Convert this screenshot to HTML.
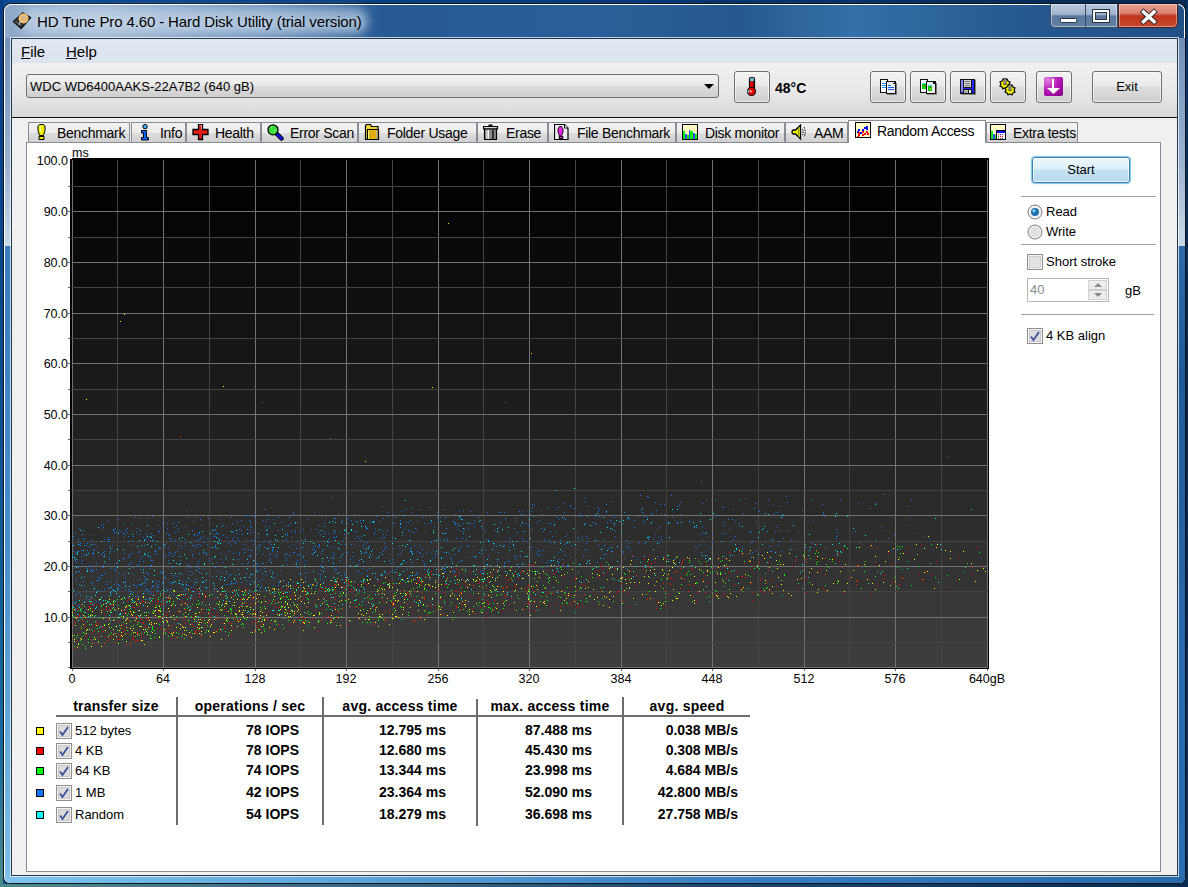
<!DOCTYPE html>
<html><head><meta charset="utf-8"><style>
*{margin:0;padding:0;box-sizing:border-box}
html,body{width:1188px;height:887px;overflow:hidden;background:#0b3a78;font-family:"Liberation Sans", sans-serif;color:#000}
.abs{position:absolute}
#desk{position:absolute;left:0;top:0;width:1188px;height:887px;background:linear-gradient(90deg,#0b4a90 0%,#0a3a78 50%,#082850 100%)}
#frame{position:absolute;left:3px;top:3px;width:1183px;height:881px;border:1px solid #0c1620;border-radius:8px 8px 7px 7px;background:#fff}
#title{position:absolute;left:5px;top:5px;width:1179px;height:33px;border-radius:6px 6px 0 0;background:linear-gradient(90deg,#8ea9c9 0%,#9fb7d2 8%,#6f92bb 22%,#275a94 32%,#2a5f99 50%,#25598f 62%,#3570a8 72%,#265a92 85%,#214f86 100%)}
#glow{position:absolute;left:20px;top:8px;width:348px;height:26px;border-radius:13px;background:rgba(200,218,236,.6);filter:blur(4px)}
#ttext{position:absolute;left:37px;top:13px;font-size:15px;letter-spacing:-0.12px;white-space:nowrap;color:#000;text-shadow:0 0 6px rgba(255,255,255,.6)}
#client{position:absolute;left:11px;top:38px;width:1167px;height:838px;border:1px solid #25384c;background:#f0f0f0;box-shadow:0 0 0 1px rgba(255,255,255,.7)}
#menu{position:absolute;left:12px;top:39px;width:1165px;height:24px;background:linear-gradient(180deg,#e2e8f1,#dce3ec)}
.mi{position:absolute;top:3px;font-size:15px}
.mi u{text-decoration:underline;text-underline-offset:1px;text-decoration-thickness:1px}
#tool{position:absolute;left:12px;top:63px;width:1165px;height:55px;background:linear-gradient(180deg,#f0f0f0 0%,#e9e9e9 50%,#d9d9d9 100%);border-bottom:1px solid #101010}
.btn{position:absolute;border:1px solid #707070;border-radius:3px;background:linear-gradient(180deg,#f2f2f2 0%,#ebebeb 45%,#dddddd 50%,#cfcfcf 100%);box-shadow:inset 0 0 0 1px rgba(255,255,255,.6)}
#combo{position:absolute;left:26px;top:74px;width:693px;height:24px;border:1px solid #707070;border-radius:3px;background:linear-gradient(180deg,#f2f2f2 0%,#ebebeb 45%,#dddddd 50%,#cfcfcf 100%);font-size:13px;padding:4px 0 0 3px;white-space:nowrap}
#tabpanel{position:absolute;left:26px;top:142px;width:1135px;height:730px;border:1px solid #898c95;background:#fff}
.tab{position:absolute;top:122px;height:21px;border:1px solid #898c95;border-bottom:none;background:linear-gradient(180deg,#f2f2f2 0%,#ebebeb 50%,#dddddd 50%,#cfcfcf 100%);white-space:nowrap}
.tab.sel{top:120px;height:23px;background:#fff;z-index:2}
.ti{position:absolute;left:5px;top:1px;width:18px;height:17px;line-height:0}
.tt{position:absolute;left:28px;top:2px;font-size:14px;letter-spacing:-0.3px}
.tab.sel .tt{top:2px}
.tab.sel .ti{top:1px}
.yl{position:absolute;left:20px;width:48px;text-align:right;font-size:12.5px;line-height:16px}
.xl{position:absolute;top:671px;width:80px;text-align:center;font-size:12.5px;line-height:16px}
.sw{position:absolute;left:36px;width:8px;height:8px;border:1px solid #000}
.cb{position:absolute;width:16px;height:16px}
.rn{position:absolute;left:75px;font-size:13px;line-height:16px}
.rv{position:absolute;font-size:14px;font-weight:bold;text-align:right;line-height:18px;white-space:nowrap}
.hd{position:absolute;top:697px;font-size:14px;font-weight:bold;text-align:center;line-height:18px;white-space:nowrap;letter-spacing:0.25px}
.vd{position:absolute;width:2px;background:#6d6d6d}
.sep{position:absolute;left:1021px;height:2px;border-top:1px solid #a0a0a0;border-bottom:1px solid #fff}
.lbl{position:absolute;font-size:13px;line-height:16px;white-space:nowrap}
</style></head><body>
<div id="desk"></div>
<div class="abs" style="left:1186px;top:0;width:2px;height:887px;background:linear-gradient(180deg,#0a3468,#06244c 40%,#0a2a50)"></div>
<div class="abs" style="left:0;top:884px;width:1188px;height:3px;background:linear-gradient(90deg,#4a8a88,#3a6a80 30%,#1a4a70 60%,#082a50)"></div>
<div class="abs" style="left:0;top:0;width:3px;height:887px;background:linear-gradient(180deg,#0a3d86 0%,#0b4a90 40%,#1a6a9a 85%,#4a8a88 100%)"></div>
<div id="frame"></div>
<div class="abs" style="left:5px;top:38px;width:6px;height:208px;background:linear-gradient(180deg,#7593ba,#9ab3d0 60%,#c9d9e9)"></div>
<div class="abs" style="left:1178px;top:38px;width:7px;height:208px;background:linear-gradient(180deg,#6f8fb8,#9ab3d0 60%,#c9d9e9)"></div>
<div class="abs" style="left:5px;top:246px;width:6px;height:630px;background:linear-gradient(180deg,#3a7cbc,#4a90cc 50%,#7cc0e8)"></div>
<div class="abs" style="left:1178px;top:246px;width:7px;height:630px;background:linear-gradient(180deg,#2e6aaa,#225a98 20%,#2a6aae 70%,#2a6db0)"></div>
<div class="abs" style="left:5px;top:876px;width:1180px;height:7px;border-radius:0 0 5px 5px;background:linear-gradient(90deg,#80c4ec,#5aa4d8 30%,#3a80c0 60%,#2a6aaa)"></div>
<div id="title"></div>
<div id="glow"></div>
<svg class="abs" style="left:10px;top:10px" width="24" height="22" viewBox="0 0 24 22"><path d="M3 11.6L12.5 2.6 21 7.6 11.2 18.9z" fill="#2a2a2a" stroke="#111" stroke-width="1"/><path d="M5 12l6 4 1-1-6-4z" fill="#666"/><circle cx="13.5" cy="8.5" r="5" fill="#f2c278"/><circle cx="13.5" cy="8.5" r="3" fill="#e8b060"/><rect x="12.5" y="6.5" width="2.5" height="2.5" fill="#b8b8c8"/><path d="M11 10l-2 5" stroke="#ddd" stroke-width="1"/></svg>
<div id="ttext">HD Tune Pro 4.60 - Hard Disk Utility (trial version)</div>
<!-- caption buttons -->
<div class="abs" style="left:1050px;top:4px;width:68px;height:24px;border:1px solid #3b4d66;border-top:none;border-radius:0 0 0 5px;background:linear-gradient(180deg,#b9c9dd 0%,#9fb4cd 45%,#5a789e 52%,#62819f 100%);box-shadow:inset 0 0 0 1px rgba(255,255,255,.45)"></div>
<div class="abs" style="left:1085px;top:4px;width:1px;height:24px;background:#3b4d66"></div>
<div class="abs" style="left:1118px;top:4px;width:60px;height:24px;border:1px solid #4a2020;border-top:none;border-radius:0 0 5px 0;background:linear-gradient(180deg,#e8a090 0%,#d88070 40%,#c0341e 52%,#c84a30 100%);box-shadow:inset 0 0 0 1px rgba(255,255,255,.4)"></div>
<svg class="abs" style="left:1040px;top:0" width="148" height="32" viewBox="0 0 148 32">
<rect x="20.5" y="18.5" width="16" height="4" rx="1" fill="#fff" stroke="#2a3440"/>
<rect x="52.5" y="9.5" width="17" height="13" fill="none" stroke="#2a3440"/>
<rect x="55.5" y="12.5" width="11" height="7" fill="none" stroke="#2a3440"/>
<rect x="54" y="11" width="14" height="10" fill="none" stroke="#fff" stroke-width="2"/>
<path d="M103.5 12L114 21.5M114 12L103.5 21.5" stroke="#3a2a2a" stroke-width="5.4" stroke-linecap="square"/>
<path d="M103.5 12L114 21.5M114 12L103.5 21.5" stroke="#fff" stroke-width="3.4" stroke-linecap="square"/>
</svg>
<div id="client"></div>
<div id="menu"></div>
<div class="mi" style="left:21px;top:43px"><u>F</u>ile</div>
<div class="mi" style="left:66px;top:43px"><u>H</u>elp</div>
<div id="tool"></div>
<div id="combo">WDC WD6400AAKS-22A7B2 (640 gB)</div>
<div class="abs" style="left:704px;top:84px;width:0;height:0;border-left:5px solid transparent;border-right:5px solid transparent;border-top:5px solid #000"></div>
<div class="btn" style="left:734px;top:71px;width:36px;height:32px"></div>
<svg class="abs" style="left:744px;top:76px" width="16" height="21" viewBox="0 0 16 21">
<rect x="5.5" y="1.5" width="5" height="13" rx="1.5" fill="#f00000" stroke="#111" stroke-width="1.2"/><rect x="6.2" y="2.2" width="3.6" height="3" fill="#40e0f0"/><rect x="9" y="5" width="1" height="9" fill="#500"/>
<circle cx="7.5" cy="15.5" r="4" fill="#e80000" stroke="#111" stroke-width="1.2"/><path d="M4.3 14v3" stroke="#60e0f0" stroke-width="1.2"/><path d="M6 14.2q.5 1.6 2 1.8" stroke="#fff" stroke-width="1.1" fill="none"/>
</svg>
<div class="abs" style="left:775px;top:80px;font-size:14px;font-weight:bold;line-height:16px">48°C</div>
<div class="btn" style="left:870px;top:71px;width:36px;height:32px"></div>
<div class="btn" style="left:910px;top:71px;width:36px;height:32px"></div>
<div class="btn" style="left:950px;top:71px;width:36px;height:32px"></div>
<div class="btn" style="left:990px;top:71px;width:36px;height:32px"></div>
<div class="btn" style="left:1036px;top:71px;width:36px;height:32px"></div>
<div class="btn" style="left:1092px;top:71px;width:70px;height:32px"></div>
<div class="abs" style="left:1092px;top:79px;width:70px;text-align:center;font-size:13px;line-height:16px">Exit</div>
<svg class="abs" style="left:874px;top:74px" width="30" height="26" viewBox="0 0 30 26" shape-rendering="crispEdges">
<rect x="6" y="5" width="8" height="14" fill="#111"/><rect x="7" y="6" width="6" height="12" fill="#fff"/>
<rect x="8" y="9" width="4" height="1" fill="#1e90ff"/><rect x="8" y="11" width="5" height="1" fill="#1e90ff"/><rect x="8" y="13" width="5" height="1" fill="#1e90ff"/>
<rect x="12" y="7" width="10" height="13" fill="#111"/><rect x="13" y="8" width="6" height="11" fill="#eee"/><rect x="19" y="10" width="2" height="9" fill="#eee"/><rect x="19" y="8" width="1" height="1" fill="#fff"/>
<rect x="14" y="11" width="3" height="1" fill="#1060ff"/><rect x="14" y="13" width="6" height="1" fill="#1060ff"/><rect x="14" y="15" width="6" height="1" fill="#1060ff"/>
<rect x="22" y="9" width="1" height="12" fill="#777"/><rect x="13" y="20" width="10" height="1" fill="#888"/>
</svg>
<svg class="abs" style="left:914px;top:74px" width="30" height="26" viewBox="0 0 30 26" shape-rendering="crispEdges">
<rect x="6" y="5" width="8" height="14" fill="#111"/><rect x="7" y="6" width="6" height="12" fill="#fff"/>
<rect x="8" y="9" width="4" height="6" fill="#00d000"/><rect x="8" y="9" width="4" height="1" fill="#30d0ff"/><rect x="10" y="11" width="1" height="1" fill="#f00"/>
<rect x="12" y="7" width="10" height="13" fill="#111"/><rect x="13" y="8" width="6" height="11" fill="#eee"/><rect x="19" y="10" width="2" height="9" fill="#eee"/>
<rect x="14" y="11" width="4" height="6" fill="#00d000"/><rect x="14" y="11" width="4" height="1" fill="#30d0ff"/><rect x="16" y="13" width="1" height="1" fill="#f00"/><rect x="16" y="14" width="1" height="2" fill="#e0e000"/>
<rect x="22" y="9" width="1" height="12" fill="#777"/><rect x="13" y="20" width="10" height="1" fill="#888"/>
</svg>
<svg class="abs" style="left:960px;top:79px" width="17" height="17" viewBox="0 0 17 17" shape-rendering="crispEdges">
<rect x="1" y="1" width="15" height="15" fill="#888"/>
<rect x="0" y="0" width="15" height="15" fill="#111"/><rect x="1" y="1" width="13" height="13" fill="#2222ff"/><rect x="1" y="1" width="2" height="12" fill="#8888ff"/>
<rect x="3" y="1" width="9" height="8" fill="#111"/><rect x="4" y="1" width="7" height="7" fill="#d4d4d4"/><rect x="5" y="2" width="5" height="1" fill="#777"/><rect x="5" y="4" width="5" height="1" fill="#777"/><rect x="5" y="6" width="5" height="1" fill="#777"/>
<rect x="3" y="10" width="9" height="5" fill="#111"/><rect x="4" y="11" width="4" height="3" fill="#b0b0b0"/><rect x="9" y="11" width="2" height="3" fill="#eee"/>
</svg>
<svg class="abs" style="left:996px;top:76px" width="22" height="22" viewBox="0 0 22 22">
<g stroke="#111" stroke-width="1.3" fill="#f0f000"><path d="M4 6l2-1 1-2 2 1 2-1 1 2 2 1-1 2 1 2-2 1-1 2-2-1-2 1-1-2-2-1 1-2z"/><path d="M9 12l2-1 1-2 2 1 2-1 1 2 2 1-1 2 1 2-2 1-1 2-2-1-2 1-1-2-2-1 1-2z"/></g>
<rect x="8" y="2.5" width="2" height="6" fill="#ccd" stroke="#222" stroke-width=".8"/><rect x="13" y="8.5" width="2" height="6" fill="#ccd" stroke="#222" stroke-width=".8"/>
</svg>
<div class="abs" style="left:1044px;top:77px;width:19px;height:19px;border-radius:2px;background:radial-gradient(circle at 20% 15%,#e080e0 0%,#b820b8 45%,#9a009a 80%,#700070 100%)"></div>
<svg class="abs" style="left:1044px;top:77px" width="19" height="19" viewBox="0 0 19 19" shape-rendering="crispEdges">
<rect x="8" y="2" width="2" height="11" fill="#fff"/><path d="M3 11h13l-6.5 6z" fill="#fff" shape-rendering="geometricPrecision"/>
</svg>
<div class="tab" style="left:28px;width:102px"><span class="ti" style="left:5px"><svg width="16" height="17" viewBox="0 0 16 17"><path d="M5.5 0.5h4l1.5 1.5v4.5l-1.5 5h-4l-1.5-5v-4.5z" fill="#f0f000" stroke="#000"/><path d="M5.5 2h1.5v6h-1z" fill="#ffff90"/><path d="M5 12.5h5v3h-5z" fill="#e8e800" stroke="#000"/></svg></span><span class="tt">Benchmark</span></div><div class="tab" style="left:131px;width:55px"><span class="ti" style="left:5px"><svg width="16" height="17" viewBox="0 0 16 17"><circle cx="8" cy="2.6" r="2.2" fill="#40b0ff" stroke="#000"/><path d="M4.5 6.5h5v7h2v2.5h-7v-2.5h2v-4.5h-2z" fill="#0a64ff" stroke="#000"/></svg></span><span class="tt">Info</span></div><div class="tab" style="left:186px;width:75px"><span class="ti" style="left:5px"><svg width="18" height="17" viewBox="0 0 18 17"><path d="M6.5 0.5h4v5h5.5v5h-5.5v5h-4v-5h-5.5v-5h5.5z" fill="#e41c1c" stroke="#000" stroke-width="1.3"/><path d="M7.5 1.5h2v4" fill="none" stroke="#ff9090"/></svg></span><span class="tt">Health</span></div><div class="tab" style="left:261px;width:97px"><span class="ti" style="left:5px"><svg width="17" height="17" viewBox="0 0 17 17"><path d="M9.5 9.5l5 5" stroke="#000" stroke-width="4.5" stroke-linecap="round"/><path d="M9.5 9.5l5 5" stroke="#1010e0" stroke-width="2.6" stroke-linecap="round"/><circle cx="6" cy="5.8" r="5" fill="#3ce03c" stroke="#000" stroke-width="1.3"/><path d="M3.5 3.5l1.5-1.5M6.5 8l2.5-2.5" stroke="#c0ffc0" stroke-width=".8"/></svg></span><span class="tt">Error Scan</span></div><div class="tab" style="left:358px;width:119px"><span class="ti" style="left:5px"><svg width="17" height="17" viewBox="0 0 17 17"><path d="M1.5 15.5V1.5l1-1h4l1 2h6.5v13z" fill="#f2d430" stroke="#000" stroke-width="1.2"/><path d="M3.5 15.5v-10h11v10z" fill="#e0b010" stroke="#000" stroke-width="1.2"/><rect x="12" y="6" width="1" height="9" fill="#aaa"/><rect x="4" y="6" width="1" height="9" fill="#fff590"/></svg></span><span class="tt">Folder Usage</span></div><div class="tab" style="left:477px;width:71px"><span class="ti" style="left:5px"><svg width="17" height="17" viewBox="0 0 17 17"><path d="M0.5 2.5h14v2.5h-14z" fill="#d8d8d8" stroke="#000" stroke-width="1.2"/><path d="M5.5 0.5h4v2h-4z" fill="#000"/><path d="M1.5 5h12v10.5h-12z" fill="#8a8a8a" stroke="#000" stroke-width="1.2"/><rect x="3" y="6" width="2" height="9" fill="#c8c8c8"/><rect x="5" y="6" width="1" height="9" fill="#f4f4f4"/><rect x="9" y="6" width="2" height="9" fill="#303030"/></svg></span><span class="tt">Erase</span></div><div class="tab" style="left:548px;width:128px"><span class="ti" style="left:5px"><svg width="16" height="17" viewBox="0 0 16 17"><path d="M0.5 0.5h10l3.5 3.5v11.5h-13.5z" fill="#f0f0f0" stroke="#000" stroke-width="1.2"/><path d="M10.5 0.5v3.5h3.5" fill="#fff" stroke="#000"/><path d="M5.5 2.5h2l1.5 2.5v3l-1.5 4h-2l-1.5-4v-3z" fill="#f020f0" stroke="#000" stroke-width=".9"/><path d="M5 12.5h4v2h-4z" fill="#e020e0" stroke="#000" stroke-width=".9"/></svg></span><span class="tt">File Benchmark</span></div><div class="tab" style="left:676px;width:109px"><span class="ti" style="left:5px"><svg width="17" height="17" viewBox="0 0 17 17" shape-rendering="crispEdges"><rect x="0" y="0" width="16" height="16" fill="#000"/><rect x="1" y="1" width="14" height="14" fill="#fff8c0"/><rect x="1" y="7" width="2" height="8" fill="#00f000"/><rect x="3" y="10" width="2" height="5" fill="#4040ff"/><rect x="5" y="11" width="2" height="4" fill="#00f000"/><rect x="7" y="6" width="1" height="9" fill="#4040ff"/><rect x="8" y="7" width="3" height="8" fill="#00f000"/><rect x="11" y="9" width="2" height="6" fill="#4040ff"/><rect x="13" y="10" width="2" height="5" fill="#00f000"/></svg></span><span class="tt">Disk monitor</span></div><div class="tab" style="left:785px;width:63px"><span class="ti" style="left:5px"><svg width="17" height="17" viewBox="0 0 17 17"><path d="M1 8a1.5 2 0 0 1 1.5-2h2l5-5v14l-5-5h-2a1.5 2 0 0 1-1.5-2z" fill="#f0f000" stroke="#000" stroke-width="1.3"/><path d="M7.5 2v12" stroke="#666" stroke-width=".6"/><path d="M11.5 5q1.2 3 0 6M13 3q2.6 5 0 10" fill="none" stroke="#000" stroke-width="1" stroke-dasharray="1.5 1"/></svg></span><span class="tt">AAM</span></div><div class="tab sel" style="left:848px;width:138px"><span class="ti" style="left:6px"><svg width="17" height="17" viewBox="0 0 17 17" shape-rendering="crispEdges"><rect x="0" y="0" width="16" height="16" fill="#000"/><rect x="1" y="1" width="14" height="14" fill="#fffbc8"/><g fill="#0000ff"><rect x="3" y="7" width="2" height="2"/><rect x="7" y="7" width="2" height="2"/><rect x="9" y="5" width="2" height="2"/><rect x="11" y="4" width="2" height="2"/><rect x="11" y="6" width="2" height="2"/><rect x="2" y="9" width="2" height="2"/><rect x="5" y="10" width="2" height="2"/></g><g fill="#ff0000"><rect x="3" y="10" width="2" height="2"/><rect x="3" y="12" width="2" height="2"/><rect x="7" y="9" width="2" height="2"/><rect x="7" y="12" width="2" height="2"/><rect x="9" y="11" width="2" height="2"/><rect x="11" y="9" width="2" height="2"/><rect x="12" y="11" width="2" height="2"/><rect x="2" y="14" width="2" height="1"/></g></svg></span><span class="tt">Random Access</span></div><div class="tab" style="left:986px;width:92px"><span class="ti" style="left:3px"><svg width="17" height="17" viewBox="0 0 17 17" shape-rendering="crispEdges"><rect x="0" y="0" width="16" height="16" fill="#000"/><rect x="1" y="1" width="14" height="14" fill="#fff8c8"/><rect x="1" y="7" width="2" height="8" fill="#00f000"/><rect x="3" y="10" width="2" height="5" fill="#4040ff"/><rect x="5" y="11" width="1" height="4" fill="#00f000"/><rect x="6" y="6" width="10" height="10" fill="#000"/><rect x="7" y="7" width="8" height="8" fill="#f4f4f4"/><rect x="7" y="7" width="8" height="2" fill="#0000f0"/><g fill="#ff0000"><rect x="8" y="10" width="1" height="1"/><rect x="12" y="10" width="1" height="1"/><rect x="10" y="12" width="1" height="1"/><rect x="12" y="12" width="1" height="1"/><rect x="8" y="14" width="1" height="1"/><rect x="10" y="14" width="1" height="1"/></g><g fill="#0000ff"><rect x="10" y="10" width="1" height="1"/><rect x="12" y="14" width="1" height="1"/></g><rect x="8" y="12" width="1" height="1" fill="#00c000"/></svg></span><span class="tt" style="left:26px">Extra tests</span></div>
<div id="tabpanel"></div>
<div class="abs" style="left:849px;top:142px;width:136px;height:2px;background:#fff;z-index:3"></div>
<svg class="abs" style="left:0;top:0" width="1188" height="887" shape-rendering="crispEdges"><rect x="72" y="158" width="917" height="511" fill="#000"/><rect x="70" y="159" width="2" height="510" fill="#000"/><rect x="72" y="160" width="916" height="27" fill="rgb(0,0,0)"/><rect x="72" y="186" width="916" height="26" fill="rgb(3,3,3)"/><rect x="72" y="211" width="916" height="27" fill="rgb(6,6,6)"/><rect x="72" y="237" width="916" height="26" fill="rgb(10,10,10)"/><rect x="72" y="262" width="916" height="26" fill="rgb(13,13,13)"/><rect x="72" y="287" width="916" height="27" fill="rgb(16,16,16)"/><rect x="72" y="313" width="916" height="26" fill="rgb(19,19,19)"/><rect x="72" y="338" width="916" height="26" fill="rgb(22,22,22)"/><rect x="72" y="363" width="916" height="27" fill="rgb(26,26,26)"/><rect x="72" y="389" width="916" height="26" fill="rgb(29,29,29)"/><rect x="72" y="414" width="916" height="26" fill="rgb(32,32,32)"/><rect x="72" y="439" width="916" height="27" fill="rgb(35,35,35)"/><rect x="72" y="465" width="916" height="26" fill="rgb(39,39,39)"/><rect x="72" y="490" width="916" height="26" fill="rgb(42,42,42)"/><rect x="72" y="515" width="916" height="27" fill="rgb(45,45,45)"/><rect x="72" y="541" width="916" height="26" fill="rgb(48,48,48)"/><rect x="72" y="566" width="916" height="26" fill="rgb(51,51,51)"/><rect x="72" y="591" width="916" height="27" fill="rgb(55,55,55)"/><rect x="72" y="617" width="916" height="26" fill="rgb(58,58,58)"/><rect x="72" y="642" width="916" height="26" fill="rgb(61,61,61)"/><rect x="72" y="160" width="1" height="508" fill="#727272"/><rect x="117" y="160" width="1" height="508" fill="#444444"/><rect x="163" y="160" width="1" height="508" fill="#727272"/><rect x="209" y="160" width="1" height="508" fill="#444444"/><rect x="255" y="160" width="1" height="508" fill="#727272"/><rect x="300" y="160" width="1" height="508" fill="#444444"/><rect x="346" y="160" width="1" height="508" fill="#727272"/><rect x="392" y="160" width="1" height="508" fill="#444444"/><rect x="438" y="160" width="1" height="508" fill="#727272"/><rect x="483" y="160" width="1" height="508" fill="#444444"/><rect x="529" y="160" width="1" height="508" fill="#727272"/><rect x="575" y="160" width="1" height="508" fill="#444444"/><rect x="621" y="160" width="1" height="508" fill="#727272"/><rect x="666" y="160" width="1" height="508" fill="#444444"/><rect x="712" y="160" width="1" height="508" fill="#727272"/><rect x="758" y="160" width="1" height="508" fill="#444444"/><rect x="804" y="160" width="1" height="508" fill="#727272"/><rect x="849" y="160" width="1" height="508" fill="#444444"/><rect x="895" y="160" width="1" height="508" fill="#727272"/><rect x="941" y="160" width="1" height="508" fill="#444444"/><rect x="987" y="160" width="1" height="508" fill="#727272"/><rect x="72" y="186" width="916" height="1" fill="#444444"/><rect x="72" y="211" width="916" height="1" fill="#727272"/><rect x="72" y="237" width="916" height="1" fill="#444444"/><rect x="72" y="262" width="916" height="1" fill="#727272"/><rect x="72" y="287" width="916" height="1" fill="#444444"/><rect x="72" y="313" width="916" height="1" fill="#727272"/><rect x="72" y="338" width="916" height="1" fill="#444444"/><rect x="72" y="363" width="916" height="1" fill="#727272"/><rect x="72" y="389" width="916" height="1" fill="#444444"/><rect x="72" y="414" width="916" height="1" fill="#727272"/><rect x="72" y="439" width="916" height="1" fill="#444444"/><rect x="72" y="465" width="916" height="1" fill="#727272"/><rect x="72" y="490" width="916" height="1" fill="#444444"/><rect x="72" y="515" width="916" height="1" fill="#727272"/><rect x="72" y="541" width="916" height="1" fill="#444444"/><rect x="72" y="566" width="916" height="1" fill="#727272"/><rect x="72" y="591" width="916" height="1" fill="#444444"/><rect x="72" y="617" width="916" height="1" fill="#727272"/><rect x="72" y="642" width="916" height="1" fill="#444444"/><rect x="72" y="667" width="916" height="1" fill="#727272"/><rect x="68" y="186" width="2" height="1" fill="#6a6a6a"/><rect x="68" y="211" width="2" height="1" fill="#6a6a6a"/><rect x="68" y="237" width="2" height="1" fill="#6a6a6a"/><rect x="68" y="262" width="2" height="1" fill="#6a6a6a"/><rect x="68" y="287" width="2" height="1" fill="#6a6a6a"/><rect x="68" y="313" width="2" height="1" fill="#6a6a6a"/><rect x="68" y="338" width="2" height="1" fill="#6a6a6a"/><rect x="68" y="363" width="2" height="1" fill="#6a6a6a"/><rect x="68" y="389" width="2" height="1" fill="#6a6a6a"/><rect x="68" y="414" width="2" height="1" fill="#6a6a6a"/><rect x="68" y="439" width="2" height="1" fill="#6a6a6a"/><rect x="68" y="465" width="2" height="1" fill="#6a6a6a"/><rect x="68" y="490" width="2" height="1" fill="#6a6a6a"/><rect x="68" y="515" width="2" height="1" fill="#6a6a6a"/><rect x="68" y="541" width="2" height="1" fill="#6a6a6a"/><rect x="68" y="566" width="2" height="1" fill="#6a6a6a"/><rect x="68" y="591" width="2" height="1" fill="#6a6a6a"/><rect x="68" y="617" width="2" height="1" fill="#6a6a6a"/><rect x="68" y="642" width="2" height="1" fill="#6a6a6a"/><rect x="68" y="667" width="2" height="1" fill="#6a6a6a"/><rect x="72" y="669" width="1" height="2" fill="#6a6a6a"/><rect x="163" y="669" width="1" height="2" fill="#6a6a6a"/><rect x="255" y="669" width="1" height="2" fill="#6a6a6a"/><rect x="346" y="669" width="1" height="2" fill="#6a6a6a"/><rect x="438" y="669" width="1" height="2" fill="#6a6a6a"/><rect x="529" y="669" width="1" height="2" fill="#6a6a6a"/><rect x="621" y="669" width="1" height="2" fill="#6a6a6a"/><rect x="712" y="669" width="1" height="2" fill="#6a6a6a"/><rect x="804" y="669" width="1" height="2" fill="#6a6a6a"/><rect x="895" y="669" width="1" height="2" fill="#6a6a6a"/><rect x="987" y="669" width="1" height="2" fill="#6a6a6a"/><rect x="988" y="158" width="1" height="511" fill="#000"/><rect x="70" y="668" width="919" height="1" fill="#000"/><path fill="#0a80ff" d="M696 527h1v1h-1zM125 577h1v1h-1zM398 567h1v1h-1zM369 579h1v1h-1zM374 534h1v1h-1zM201 538h1v1h-1zM289 517h1v1h-1zM392 559h1v1h-1zM383 551h1v1h-1zM468 528h1v1h-1zM90 565h1v1h-1zM410 549h1v1h-1zM400 520h1v1h-1zM208 518h1v1h-1zM100 590h1v1h-1zM185 590h1v1h-1zM250 555h1v1h-1zM201 525h1v1h-1zM84 545h1v1h-1zM438 539h1v1h-1zM328 539h1v1h-1zM124 558h1v1h-1zM557 517h1v1h-1zM199 553h1v1h-1zM505 518h1v1h-1zM611 551h1v1h-1zM434 527h1v1h-1zM387 512h1v1h-1zM260 544h1v1h-1zM408 530h1v1h-1zM256 554h1v1h-1zM219 539h1v1h-1zM473 523h1v1h-1zM650 523h1v1h-1zM627 548h1v1h-1zM320 577h1v1h-1zM148 566h1v1h-1zM155 550h1v1h-1zM429 572h1v1h-1zM151 560h1v1h-1zM377 579h1v1h-1zM197 582h1v1h-1zM397 574h1v1h-1zM288 525h1v1h-1zM107 520h1v1h-1zM599 516h1v1h-1zM598 544h1v1h-1zM143 537h1v1h-1zM297 560h1v1h-1zM220 559h1v1h-1zM812 499h1v1h-1zM243 526h1v1h-1zM217 566h1v1h-1zM73 545h1v1h-1zM363 566h1v1h-1zM417 521h1v1h-1zM104 589h1v1h-1zM306 552h1v1h-1zM444 569h1v1h-1zM173 575h1v1h-1zM756 521h1v1h-1zM156 582h1v1h-1zM131 562h1v1h-1zM380 538h1v1h-1zM906 525h1v1h-1zM226 571h1v1h-1zM441 557h1v1h-1zM765 541h1v1h-1zM428 575h1v1h-1zM564 518h1v1h-1zM507 531h1v1h-1zM300 574h1v1h-1zM75 608h1v1h-1zM128 536h1v1h-1zM312 549h1v1h-1zM114 584h1v1h-1zM187 565h1v1h-1zM152 516h1v1h-1zM603 558h1v1h-1zM813 520h1v1h-1zM402 550h1v1h-1zM187 517h1v1h-1zM463 523h1v1h-1zM164 557h1v1h-1zM450 557h1v1h-1zM730 541h1v1h-1zM272 550h1v1h-1zM470 511h1v1h-1zM266 521h1v1h-1zM197 541h1v1h-1zM432 558h1v1h-1zM623 552h1v1h-1zM700 534h1v1h-1zM250 522h1v1h-1zM520 525h1v1h-1zM929 538h1v1h-1zM485 531h1v1h-1zM360 520h1v1h-1zM347 518h1v1h-1zM724 525h1v1h-1zM398 578h1v1h-1zM435 553h1v1h-1zM128 589h1v1h-1zM703 532h1v1h-1zM570 506h1v1h-1zM354 538h1v1h-1zM536 553h1v1h-1zM124 534h1v1h-1zM416 574h1v1h-1zM234 541h1v1h-1zM444 509h1v1h-1zM610 520h1v1h-1zM72 545h1v1h-1zM87 568h1v1h-1zM99 600h1v1h-1zM562 565h1v1h-1zM578 537h1v1h-1zM473 556h1v1h-1zM278 530h1v1h-1zM116 563h1v1h-1zM84 576h1v1h-1zM523 540h1v1h-1zM158 590h1v1h-1zM256 586h1v1h-1zM133 536h1v1h-1zM706 499h1v1h-1zM185 526h1v1h-1zM226 593h1v1h-1zM532 507h1v1h-1zM319 532h1v1h-1zM324 568h1v1h-1zM648 539h1v1h-1zM357 570h1v1h-1zM586 543h1v1h-1zM209 539h1v1h-1zM72 555h1v1h-1zM259 590h1v1h-1zM218 590h1v1h-1zM293 544h1v1h-1zM888 538h1v1h-1zM424 563h1v1h-1zM133 574h1v1h-1zM103 552h1v1h-1zM109 541h1v1h-1zM158 525h1v1h-1zM108 541h1v1h-1zM424 565h1v1h-1zM341 575h1v1h-1zM98 577h1v1h-1zM315 551h1v1h-1zM400 564h1v1h-1zM380 552h1v1h-1zM193 586h1v1h-1zM393 548h1v1h-1zM122 559h1v1h-1zM570 505h1v1h-1zM416 529h1v1h-1zM228 543h1v1h-1zM125 582h1v1h-1zM135 596h1v1h-1zM216 533h1v1h-1zM450 557h1v1h-1zM139 561h1v1h-1zM320 574h1v1h-1zM127 528h1v1h-1zM92 540h1v1h-1zM261 585h1v1h-1zM85 566h1v1h-1zM595 516h1v1h-1zM575 497h1v1h-1zM320 534h1v1h-1zM119 530h1v1h-1zM144 581h1v1h-1zM499 567h1v1h-1zM155 544h1v1h-1zM623 551h1v1h-1zM145 554h1v1h-1zM301 547h1v1h-1zM356 521h1v1h-1zM462 569h1v1h-1zM139 551h1v1h-1zM223 562h1v1h-1zM647 496h1v1h-1zM552 536h1v1h-1zM169 534h1v1h-1zM269 526h1v1h-1zM333 537h1v1h-1zM150 540h1v1h-1zM701 552h1v1h-1zM911 515h1v1h-1zM246 548h1v1h-1zM253 574h1v1h-1zM401 511h1v1h-1zM559 519h1v1h-1zM247 529h1v1h-1zM453 521h1v1h-1zM197 589h1v1h-1zM341 556h1v1h-1zM417 572h1v1h-1zM411 531h1v1h-1zM190 567h1v1h-1zM324 542h1v1h-1zM250 529h1v1h-1zM529 525h1v1h-1zM708 559h1v1h-1zM161 573h1v1h-1zM520 514h1v1h-1zM149 537h1v1h-1zM89 566h1v1h-1zM445 564h1v1h-1zM739 525h1v1h-1zM370 522h1v1h-1zM537 522h1v1h-1zM185 545h1v1h-1zM235 575h1v1h-1zM358 571h1v1h-1zM199 532h1v1h-1zM354 514h1v1h-1zM186 581h1v1h-1zM595 524h1v1h-1zM98 580h1v1h-1zM96 580h1v1h-1zM228 577h1v1h-1zM280 570h1v1h-1zM75 595h1v1h-1zM195 547h1v1h-1zM565 555h1v1h-1zM73 603h1v1h-1zM76 579h1v1h-1zM333 562h1v1h-1zM567 565h1v1h-1zM742 550h1v1h-1zM239 529h1v1h-1zM116 532h1v1h-1zM144 576h1v1h-1zM132 540h1v1h-1zM338 513h1v1h-1zM347 552h1v1h-1zM366 550h1v1h-1zM444 568h1v1h-1zM114 533h1v1h-1zM543 531h1v1h-1zM505 402h1v1h-1z"/><path fill="#00f0f0" d="M381 574h1v1h-1zM629 588h1v1h-1zM364 598h1v1h-1zM586 563h1v1h-1zM742 526h1v1h-1zM274 593h1v1h-1zM364 589h1v1h-1zM290 588h1v1h-1zM73 591h1v1h-1zM221 587h1v1h-1zM809 534h1v1h-1zM635 566h1v1h-1zM689 562h1v1h-1zM513 545h1v1h-1zM314 552h1v1h-1zM77 552h1v1h-1zM119 617h1v1h-1zM508 527h1v1h-1zM648 537h1v1h-1zM285 534h1v1h-1zM497 571h1v1h-1zM99 627h1v1h-1zM574 488h1v1h-1zM282 565h1v1h-1zM132 600h1v1h-1zM808 577h1v1h-1zM332 587h1v1h-1zM497 591h1v1h-1zM104 556h1v1h-1zM110 592h1v1h-1zM119 625h1v1h-1zM89 601h1v1h-1zM562 517h1v1h-1zM436 569h1v1h-1zM512 580h1v1h-1zM220 543h1v1h-1zM407 544h1v1h-1zM191 595h1v1h-1zM487 559h1v1h-1zM839 543h1v1h-1zM149 624h1v1h-1zM212 563h1v1h-1zM544 529h1v1h-1zM317 582h1v1h-1zM188 578h1v1h-1zM440 521h1v1h-1zM190 597h1v1h-1zM366 548h1v1h-1zM86 555h1v1h-1zM247 612h1v1h-1zM287 592h1v1h-1zM505 571h1v1h-1zM373 522h1v1h-1zM338 548h1v1h-1zM653 549h1v1h-1zM395 538h1v1h-1zM72 557h1v1h-1zM600 532h1v1h-1zM341 522h1v1h-1zM497 559h1v1h-1zM441 547h1v1h-1zM402 545h1v1h-1zM80 530h1v1h-1zM681 522h1v1h-1zM351 530h1v1h-1zM465 569h1v1h-1zM734 570h1v1h-1zM459 516h1v1h-1zM373 521h1v1h-1zM669 537h1v1h-1zM502 529h1v1h-1zM117 549h1v1h-1zM138 615h1v1h-1zM781 517h1v1h-1zM844 545h1v1h-1zM120 613h1v1h-1zM322 558h1v1h-1zM327 557h1v1h-1zM710 559h1v1h-1zM125 586h1v1h-1zM612 567h1v1h-1zM835 516h1v1h-1zM392 543h1v1h-1zM587 561h1v1h-1zM597 513h1v1h-1zM379 529h1v1h-1zM364 535h1v1h-1zM507 592h1v1h-1zM198 616h1v1h-1zM463 528h1v1h-1zM214 588h1v1h-1zM400 523h1v1h-1zM79 600h1v1h-1zM210 533h1v1h-1zM403 580h1v1h-1zM323 599h1v1h-1zM338 543h1v1h-1zM272 592h1v1h-1zM76 567h1v1h-1zM232 592h1v1h-1zM190 542h1v1h-1zM727 568h1v1h-1zM645 565h1v1h-1zM77 614h1v1h-1zM644 576h1v1h-1zM332 521h1v1h-1zM333 577h1v1h-1zM796 556h1v1h-1zM331 597h1v1h-1zM216 537h1v1h-1zM206 580h1v1h-1zM436 540h1v1h-1zM335 581h1v1h-1zM497 528h1v1h-1zM347 577h1v1h-1zM503 546h1v1h-1zM113 607h1v1h-1zM139 601h1v1h-1zM244 577h1v1h-1zM941 549h1v1h-1zM473 571h1v1h-1zM482 579h1v1h-1zM589 560h1v1h-1zM810 547h1v1h-1zM655 575h1v1h-1zM354 600h1v1h-1zM335 522h1v1h-1z"/><path fill="#00ff00" d="M319 613h1v1h-1zM205 623h1v1h-1zM308 585h1v1h-1zM567 587h1v1h-1zM527 606h1v1h-1zM399 573h1v1h-1zM540 601h1v1h-1zM394 598h1v1h-1zM84 606h1v1h-1zM560 597h1v1h-1zM574 612h1v1h-1zM120 628h1v1h-1zM88 642h1v1h-1zM160 608h1v1h-1zM258 601h1v1h-1zM87 621h1v1h-1zM235 595h1v1h-1zM341 608h1v1h-1zM514 591h1v1h-1zM426 590h1v1h-1zM781 580h1v1h-1zM702 555h1v1h-1zM690 574h1v1h-1zM78 633h1v1h-1zM345 595h1v1h-1zM315 591h1v1h-1zM95 621h1v1h-1zM111 632h1v1h-1zM709 601h1v1h-1zM515 571h1v1h-1zM720 561h1v1h-1zM622 603h1v1h-1zM152 626h1v1h-1zM101 605h1v1h-1zM779 561h1v1h-1zM441 607h1v1h-1zM242 612h1v1h-1zM391 601h1v1h-1zM270 593h1v1h-1zM585 601h1v1h-1zM686 575h1v1h-1zM206 617h1v1h-1zM587 601h1v1h-1zM818 552h1v1h-1zM602 591h1v1h-1zM191 616h1v1h-1zM340 593h1v1h-1zM73 616h1v1h-1zM797 549h1v1h-1zM433 611h1v1h-1zM549 580h1v1h-1zM711 567h1v1h-1zM533 586h1v1h-1zM226 604h1v1h-1zM238 589h1v1h-1zM92 630h1v1h-1zM573 597h1v1h-1zM293 602h1v1h-1zM709 596h1v1h-1zM109 596h1v1h-1zM440 596h1v1h-1zM229 632h1v1h-1zM363 582h1v1h-1zM154 630h1v1h-1zM139 626h1v1h-1zM160 616h1v1h-1zM555 577h1v1h-1zM660 602h1v1h-1zM545 573h1v1h-1zM882 571h1v1h-1zM598 566h1v1h-1zM151 631h1v1h-1zM114 619h1v1h-1zM646 570h1v1h-1zM438 606h1v1h-1zM419 586h1v1h-1zM113 602h1v1h-1zM136 618h1v1h-1zM900 553h1v1h-1zM370 622h1v1h-1zM131 626h1v1h-1zM687 573h1v1h-1zM293 588h1v1h-1zM894 577h1v1h-1zM581 588h1v1h-1zM496 595h1v1h-1zM177 595h1v1h-1zM586 598h1v1h-1zM283 618h1v1h-1zM305 620h1v1h-1zM192 604h1v1h-1zM598 601h1v1h-1zM298 610h1v1h-1zM156 607h1v1h-1zM222 629h1v1h-1zM155 633h1v1h-1zM123 618h1v1h-1zM474 565h1v1h-1zM264 619h1v1h-1zM697 583h1v1h-1zM129 609h1v1h-1zM160 610h1v1h-1zM731 571h1v1h-1zM132 594h1v1h-1zM147 632h1v1h-1zM176 616h1v1h-1zM244 592h1v1h-1zM466 585h1v1h-1zM144 615h1v1h-1zM625 574h1v1h-1zM83 632h1v1h-1zM119 621h1v1h-1zM392 595h1v1h-1zM692 571h1v1h-1zM225 631h1v1h-1zM160 595h1v1h-1zM363 609h1v1h-1zM338 605h1v1h-1zM287 597h1v1h-1zM802 588h1v1h-1zM205 605h1v1h-1zM766 588h1v1h-1zM152 628h1v1h-1zM564 592h1v1h-1zM264 606h1v1h-1zM707 575h1v1h-1zM712 594h1v1h-1zM181 636h1v1h-1zM473 580h1v1h-1zM405 582h1v1h-1zM450 605h1v1h-1zM112 608h1v1h-1zM117 599h1v1h-1zM818 561h1v1h-1z"/><path fill="#ff0000" d="M298 607h1v1h-1zM769 590h1v1h-1zM510 568h1v1h-1zM321 588h1v1h-1zM289 611h1v1h-1zM233 596h1v1h-1zM256 627h1v1h-1zM355 589h1v1h-1zM138 606h1v1h-1zM154 594h1v1h-1zM804 580h1v1h-1zM643 569h1v1h-1zM185 609h1v1h-1zM252 622h1v1h-1zM848 578h1v1h-1zM385 620h1v1h-1zM329 584h1v1h-1zM623 591h1v1h-1zM417 577h1v1h-1zM481 586h1v1h-1zM456 591h1v1h-1zM539 602h1v1h-1zM255 612h1v1h-1zM842 567h1v1h-1zM96 605h1v1h-1zM527 570h1v1h-1zM925 571h1v1h-1zM806 562h1v1h-1zM192 624h1v1h-1zM461 609h1v1h-1zM140 633h1v1h-1zM257 618h1v1h-1zM184 603h1v1h-1zM768 562h1v1h-1zM94 605h1v1h-1zM115 642h1v1h-1zM342 586h1v1h-1zM535 575h1v1h-1zM692 595h1v1h-1zM312 618h1v1h-1zM150 597h1v1h-1zM283 605h1v1h-1zM535 611h1v1h-1zM353 595h1v1h-1zM300 600h1v1h-1zM548 593h1v1h-1zM98 623h1v1h-1zM607 578h1v1h-1zM281 588h1v1h-1zM169 628h1v1h-1zM326 613h1v1h-1zM323 597h1v1h-1zM117 639h1v1h-1zM181 595h1v1h-1zM100 606h1v1h-1zM375 607h1v1h-1zM328 616h1v1h-1zM726 577h1v1h-1zM769 556h1v1h-1zM632 555h1v1h-1zM126 633h1v1h-1zM147 602h1v1h-1zM793 566h1v1h-1zM326 590h1v1h-1zM982 566h1v1h-1zM133 636h1v1h-1zM348 583h1v1h-1zM526 591h1v1h-1zM456 607h1v1h-1zM338 612h1v1h-1zM308 595h1v1h-1zM289 618h1v1h-1zM261 616h1v1h-1zM159 613h1v1h-1zM527 587h1v1h-1zM414 590h1v1h-1zM141 627h1v1h-1zM397 574h1v1h-1zM433 605h1v1h-1zM666 559h1v1h-1zM333 596h1v1h-1zM461 592h1v1h-1zM906 552h1v1h-1zM647 599h1v1h-1zM825 574h1v1h-1zM768 570h1v1h-1zM407 592h1v1h-1zM157 603h1v1h-1zM317 597h1v1h-1zM254 631h1v1h-1zM133 616h1v1h-1zM267 619h1v1h-1zM599 571h1v1h-1zM899 584h1v1h-1zM226 611h1v1h-1zM143 601h1v1h-1zM842 550h1v1h-1zM431 571h1v1h-1zM141 637h1v1h-1zM644 576h1v1h-1zM380 585h1v1h-1zM274 600h1v1h-1zM473 585h1v1h-1zM883 575h1v1h-1zM518 578h1v1h-1zM162 603h1v1h-1zM789 553h1v1h-1zM744 563h1v1h-1zM419 580h1v1h-1zM231 623h1v1h-1zM504 595h1v1h-1zM330 626h1v1h-1zM208 612h1v1h-1zM77 608h1v1h-1zM599 577h1v1h-1zM529 610h1v1h-1zM198 591h1v1h-1zM407 604h1v1h-1zM798 589h1v1h-1zM526 591h1v1h-1zM534 591h1v1h-1zM299 617h1v1h-1zM287 588h1v1h-1zM203 618h1v1h-1zM323 597h1v1h-1zM742 576h1v1h-1zM936 561h1v1h-1zM330 620h1v1h-1zM105 637h1v1h-1zM647 593h1v1h-1zM648 562h1v1h-1zM322 608h1v1h-1zM547 570h1v1h-1zM385 618h1v1h-1zM485 596h1v1h-1zM262 623h1v1h-1zM892 582h1v1h-1zM167 620h1v1h-1zM601 564h1v1h-1zM298 610h1v1h-1zM575 578h1v1h-1zM442 606h1v1h-1zM985 571h1v1h-1zM857 565h1v1h-1z"/><path fill="#ffff00" d="M314 593h1v1h-1zM361 584h1v1h-1zM261 626h1v1h-1zM250 607h1v1h-1zM242 603h1v1h-1zM133 632h1v1h-1zM197 627h1v1h-1zM699 569h1v1h-1zM898 559h1v1h-1zM287 613h1v1h-1zM481 612h1v1h-1zM797 579h1v1h-1zM450 596h1v1h-1zM400 593h1v1h-1zM145 629h1v1h-1zM180 624h1v1h-1zM150 601h1v1h-1zM674 563h1v1h-1zM772 593h1v1h-1zM597 597h1v1h-1zM977 570h1v1h-1zM297 607h1v1h-1zM99 599h1v1h-1zM443 573h1v1h-1zM888 551h1v1h-1zM393 603h1v1h-1zM348 599h1v1h-1zM106 603h1v1h-1zM182 626h1v1h-1zM290 599h1v1h-1zM258 621h1v1h-1zM515 590h1v1h-1zM818 589h1v1h-1zM166 617h1v1h-1zM220 594h1v1h-1zM410 593h1v1h-1zM173 590h1v1h-1zM179 595h1v1h-1zM484 570h1v1h-1zM543 571h1v1h-1zM290 616h1v1h-1zM113 620h1v1h-1zM141 640h1v1h-1zM108 636h1v1h-1zM606 597h1v1h-1zM422 581h1v1h-1zM131 614h1v1h-1zM113 639h1v1h-1zM379 614h1v1h-1zM737 576h1v1h-1zM772 586h1v1h-1zM264 619h1v1h-1zM236 614h1v1h-1zM568 595h1v1h-1zM717 573h1v1h-1zM459 580h1v1h-1zM934 588h1v1h-1zM127 618h1v1h-1zM167 621h1v1h-1zM617 569h1v1h-1zM199 622h1v1h-1zM718 558h1v1h-1zM269 590h1v1h-1zM280 598h1v1h-1zM350 591h1v1h-1zM363 587h1v1h-1zM140 603h1v1h-1zM516 584h1v1h-1zM812 584h1v1h-1zM252 632h1v1h-1zM867 579h1v1h-1zM655 591h1v1h-1zM370 608h1v1h-1zM290 585h1v1h-1zM235 613h1v1h-1zM195 613h1v1h-1zM226 620h1v1h-1zM777 568h1v1h-1zM343 592h1v1h-1zM464 604h1v1h-1zM490 590h1v1h-1zM349 620h1v1h-1zM478 593h1v1h-1zM395 610h1v1h-1zM394 593h1v1h-1zM642 594h1v1h-1zM285 615h1v1h-1zM199 633h1v1h-1zM302 591h1v1h-1zM510 570h1v1h-1zM222 588h1v1h-1zM613 596h1v1h-1zM304 603h1v1h-1zM673 589h1v1h-1zM476 603h1v1h-1zM985 571h1v1h-1zM368 602h1v1h-1zM730 593h1v1h-1zM176 627h1v1h-1zM314 615h1v1h-1zM309 622h1v1h-1zM220 609h1v1h-1zM465 606h1v1h-1zM177 598h1v1h-1zM469 609h1v1h-1zM377 591h1v1h-1zM629 588h1v1h-1zM429 585h1v1h-1zM306 594h1v1h-1zM521 588h1v1h-1zM149 620h1v1h-1zM416 583h1v1h-1zM851 577h1v1h-1zM121 610h1v1h-1zM389 624h1v1h-1zM77 647h1v1h-1zM639 582h1v1h-1zM762 555h1v1h-1zM438 609h1v1h-1zM339 601h1v1h-1zM199 588h1v1h-1zM287 604h1v1h-1zM398 617h1v1h-1zM304 623h1v1h-1zM103 604h1v1h-1zM924 548h1v1h-1zM253 609h1v1h-1zM375 622h1v1h-1zM308 602h1v1h-1zM460 592h1v1h-1zM74 639h1v1h-1zM113 634h1v1h-1zM333 618h1v1h-1zM822 558h1v1h-1zM223 386h1v1h-1z"/><path fill="#0a80ff" d="M93 554h1v1h-1zM192 530h1v1h-1zM286 539h1v1h-1zM541 528h1v1h-1zM522 511h1v1h-1zM382 506h1v1h-1zM137 595h1v1h-1zM209 523h1v1h-1zM367 575h1v1h-1zM167 523h1v1h-1zM651 513h1v1h-1zM634 527h1v1h-1zM359 538h1v1h-1zM509 561h1v1h-1zM356 531h1v1h-1zM732 555h1v1h-1zM729 529h1v1h-1zM479 517h1v1h-1zM119 573h1v1h-1zM294 564h1v1h-1zM380 575h1v1h-1zM268 514h1v1h-1zM550 531h1v1h-1zM567 566h1v1h-1zM466 539h1v1h-1zM111 594h1v1h-1zM840 499h1v1h-1zM111 568h1v1h-1zM111 581h1v1h-1zM118 589h1v1h-1zM182 586h1v1h-1zM486 539h1v1h-1zM407 569h1v1h-1zM101 554h1v1h-1zM158 531h1v1h-1zM514 528h1v1h-1zM215 546h1v1h-1zM770 551h1v1h-1zM268 519h1v1h-1zM733 539h1v1h-1zM390 571h1v1h-1zM160 548h1v1h-1zM386 535h1v1h-1zM145 579h1v1h-1zM462 538h1v1h-1zM779 541h1v1h-1zM148 602h1v1h-1zM549 560h1v1h-1zM244 544h1v1h-1zM369 568h1v1h-1zM668 559h1v1h-1zM655 534h1v1h-1zM488 540h1v1h-1zM621 514h1v1h-1zM641 510h1v1h-1zM583 555h1v1h-1zM172 556h1v1h-1zM186 510h1v1h-1zM339 549h1v1h-1zM84 554h1v1h-1zM374 532h1v1h-1zM679 505h1v1h-1zM125 581h1v1h-1zM485 564h1v1h-1zM294 552h1v1h-1zM266 534h1v1h-1zM146 538h1v1h-1zM415 575h1v1h-1zM615 531h1v1h-1zM147 556h1v1h-1zM497 561h1v1h-1zM377 566h1v1h-1zM242 534h1v1h-1zM248 515h1v1h-1zM767 531h1v1h-1zM580 564h1v1h-1zM735 536h1v1h-1zM171 573h1v1h-1zM218 534h1v1h-1zM230 541h1v1h-1zM504 545h1v1h-1zM78 539h1v1h-1zM376 558h1v1h-1zM577 531h1v1h-1zM83 581h1v1h-1zM178 528h1v1h-1zM340 557h1v1h-1zM196 540h1v1h-1zM775 532h1v1h-1zM203 568h1v1h-1zM638 516h1v1h-1zM710 548h1v1h-1zM79 584h1v1h-1zM456 538h1v1h-1zM159 531h1v1h-1zM249 520h1v1h-1zM173 595h1v1h-1zM373 515h1v1h-1zM509 547h1v1h-1zM145 578h1v1h-1zM274 555h1v1h-1zM233 531h1v1h-1zM657 556h1v1h-1zM281 522h1v1h-1zM540 550h1v1h-1zM101 525h1v1h-1zM375 528h1v1h-1zM558 552h1v1h-1zM199 572h1v1h-1zM121 587h1v1h-1zM287 535h1v1h-1zM406 522h1v1h-1zM392 537h1v1h-1zM404 560h1v1h-1zM702 540h1v1h-1zM423 560h1v1h-1zM226 573h1v1h-1zM558 564h1v1h-1zM608 548h1v1h-1zM272 574h1v1h-1zM138 552h1v1h-1zM295 530h1v1h-1zM276 556h1v1h-1zM375 528h1v1h-1zM532 557h1v1h-1zM315 545h1v1h-1zM191 587h1v1h-1zM584 549h1v1h-1zM264 509h1v1h-1zM504 512h1v1h-1zM411 552h1v1h-1zM894 535h1v1h-1zM173 523h1v1h-1zM520 556h1v1h-1zM523 563h1v1h-1zM79 571h1v1h-1zM564 544h1v1h-1zM597 562h1v1h-1zM458 551h1v1h-1zM415 579h1v1h-1zM780 530h1v1h-1zM192 591h1v1h-1zM264 541h1v1h-1zM334 518h1v1h-1zM277 553h1v1h-1zM260 569h1v1h-1zM174 554h1v1h-1zM509 538h1v1h-1zM78 605h1v1h-1zM528 525h1v1h-1zM414 532h1v1h-1zM98 581h1v1h-1zM87 550h1v1h-1zM137 565h1v1h-1zM534 505h1v1h-1zM168 547h1v1h-1zM530 547h1v1h-1zM80 595h1v1h-1zM498 552h1v1h-1zM233 537h1v1h-1zM453 570h1v1h-1zM123 582h1v1h-1zM171 592h1v1h-1zM143 561h1v1h-1zM498 512h1v1h-1zM102 529h1v1h-1zM177 576h1v1h-1zM293 552h1v1h-1zM435 556h1v1h-1zM130 563h1v1h-1zM431 542h1v1h-1zM783 514h1v1h-1zM380 521h1v1h-1zM209 560h1v1h-1zM231 574h1v1h-1zM367 528h1v1h-1zM359 560h1v1h-1zM253 532h1v1h-1zM150 558h1v1h-1zM586 536h1v1h-1zM370 560h1v1h-1zM231 517h1v1h-1zM582 536h1v1h-1zM150 565h1v1h-1zM653 539h1v1h-1zM752 541h1v1h-1zM144 555h1v1h-1zM907 506h1v1h-1zM239 552h1v1h-1zM410 520h1v1h-1zM333 552h1v1h-1zM81 550h1v1h-1zM408 522h1v1h-1zM409 576h1v1h-1zM324 531h1v1h-1zM148 598h1v1h-1zM89 596h1v1h-1zM194 534h1v1h-1zM306 545h1v1h-1zM163 526h1v1h-1zM468 546h1v1h-1zM87 543h1v1h-1zM644 516h1v1h-1zM274 589h1v1h-1zM474 520h1v1h-1zM92 552h1v1h-1zM455 523h1v1h-1zM293 514h1v1h-1zM244 552h1v1h-1zM884 494h1v1h-1zM160 571h1v1h-1zM251 527h1v1h-1zM551 523h1v1h-1zM379 556h1v1h-1zM109 539h1v1h-1zM108 539h1v1h-1zM185 543h1v1h-1zM163 546h1v1h-1zM336 582h1v1h-1zM103 524h1v1h-1zM277 551h1v1h-1zM259 547h1v1h-1zM545 539h1v1h-1zM264 568h1v1h-1zM78 544h1v1h-1zM79 544h1v1h-1zM558 507h1v1h-1zM206 538h1v1h-1zM437 554h1v1h-1zM74 558h1v1h-1zM313 546h1v1h-1zM499 527h1v1h-1zM220 572h1v1h-1zM247 563h1v1h-1zM556 569h1v1h-1zM419 552h1v1h-1zM256 548h1v1h-1zM660 527h1v1h-1zM322 516h1v1h-1zM110 594h1v1h-1zM152 582h1v1h-1zM239 554h1v1h-1zM947 457h1v1h-1z"/><path fill="#00f0f0" d="M138 597h1v1h-1zM175 605h1v1h-1zM466 580h1v1h-1zM412 575h1v1h-1zM265 571h1v1h-1zM142 583h1v1h-1zM847 516h1v1h-1zM91 624h1v1h-1zM304 566h1v1h-1zM557 568h1v1h-1zM216 526h1v1h-1zM91 544h1v1h-1zM436 551h1v1h-1zM444 539h1v1h-1zM148 555h1v1h-1zM573 528h1v1h-1zM365 526h1v1h-1zM428 573h1v1h-1zM649 577h1v1h-1zM350 565h1v1h-1zM399 575h1v1h-1zM333 597h1v1h-1zM645 567h1v1h-1zM77 554h1v1h-1zM361 581h1v1h-1zM202 577h1v1h-1zM334 603h1v1h-1zM190 609h1v1h-1zM128 573h1v1h-1zM186 588h1v1h-1zM725 573h1v1h-1zM285 592h1v1h-1zM87 570h1v1h-1zM160 593h1v1h-1zM310 541h1v1h-1zM628 517h1v1h-1zM76 559h1v1h-1zM87 571h1v1h-1zM267 548h1v1h-1zM320 605h1v1h-1zM342 604h1v1h-1zM433 530h1v1h-1zM273 547h1v1h-1zM173 560h1v1h-1zM250 584h1v1h-1zM479 521h1v1h-1zM247 533h1v1h-1zM832 544h1v1h-1zM618 580h1v1h-1zM203 550h1v1h-1zM187 605h1v1h-1zM509 550h1v1h-1zM225 567h1v1h-1zM188 607h1v1h-1zM361 553h1v1h-1zM507 573h1v1h-1zM560 549h1v1h-1zM196 621h1v1h-1zM82 604h1v1h-1zM430 560h1v1h-1zM487 564h1v1h-1zM163 582h1v1h-1zM100 599h1v1h-1zM108 602h1v1h-1zM206 609h1v1h-1zM308 586h1v1h-1zM728 580h1v1h-1zM411 567h1v1h-1zM749 553h1v1h-1zM617 561h1v1h-1zM196 570h1v1h-1zM837 555h1v1h-1zM240 578h1v1h-1zM441 569h1v1h-1zM432 604h1v1h-1zM405 500h1v1h-1zM433 532h1v1h-1zM512 541h1v1h-1zM418 603h1v1h-1zM111 587h1v1h-1zM286 585h1v1h-1zM249 577h1v1h-1zM91 597h1v1h-1zM772 539h1v1h-1zM129 586h1v1h-1zM327 545h1v1h-1zM206 554h1v1h-1zM523 531h1v1h-1zM417 559h1v1h-1zM527 556h1v1h-1zM710 519h1v1h-1zM266 530h1v1h-1zM143 569h1v1h-1zM106 606h1v1h-1zM382 575h1v1h-1zM447 567h1v1h-1zM109 615h1v1h-1zM110 604h1v1h-1zM700 513h1v1h-1zM239 574h1v1h-1zM119 596h1v1h-1zM443 576h1v1h-1zM500 545h1v1h-1zM492 549h1v1h-1zM363 561h1v1h-1zM935 518h1v1h-1zM342 554h1v1h-1zM348 533h1v1h-1zM579 581h1v1h-1zM762 544h1v1h-1zM153 595h1v1h-1zM400 574h1v1h-1zM548 578h1v1h-1zM139 540h1v1h-1zM185 594h1v1h-1zM119 617h1v1h-1zM481 550h1v1h-1zM356 589h1v1h-1zM428 569h1v1h-1zM95 595h1v1h-1zM307 592h1v1h-1zM78 620h1v1h-1zM152 581h1v1h-1zM238 595h1v1h-1zM162 572h1v1h-1zM865 535h1v1h-1zM226 598h1v1h-1z"/><path fill="#00ff00" d="M369 595h1v1h-1zM725 583h1v1h-1zM85 648h1v1h-1zM174 590h1v1h-1zM450 605h1v1h-1zM84 612h1v1h-1zM296 590h1v1h-1zM447 587h1v1h-1zM151 638h1v1h-1zM326 609h1v1h-1zM408 612h1v1h-1zM479 586h1v1h-1zM261 609h1v1h-1zM250 632h1v1h-1zM258 629h1v1h-1zM126 605h1v1h-1zM729 589h1v1h-1zM272 588h1v1h-1zM304 622h1v1h-1zM178 633h1v1h-1zM90 616h1v1h-1zM136 604h1v1h-1zM411 581h1v1h-1zM491 592h1v1h-1zM201 604h1v1h-1zM527 573h1v1h-1zM689 581h1v1h-1zM81 611h1v1h-1zM186 630h1v1h-1zM511 567h1v1h-1zM575 591h1v1h-1zM396 592h1v1h-1zM825 585h1v1h-1zM490 608h1v1h-1zM490 565h1v1h-1zM141 633h1v1h-1zM706 561h1v1h-1zM162 614h1v1h-1zM816 550h1v1h-1zM482 599h1v1h-1zM159 616h1v1h-1zM489 607h1v1h-1zM544 587h1v1h-1zM534 571h1v1h-1zM172 604h1v1h-1zM219 603h1v1h-1zM495 607h1v1h-1zM219 607h1v1h-1zM72 608h1v1h-1zM703 572h1v1h-1zM236 616h1v1h-1zM411 590h1v1h-1zM543 585h1v1h-1zM223 591h1v1h-1zM935 577h1v1h-1zM311 588h1v1h-1zM419 584h1v1h-1zM227 621h1v1h-1zM356 606h1v1h-1zM528 598h1v1h-1zM208 630h1v1h-1zM727 567h1v1h-1zM715 590h1v1h-1zM458 607h1v1h-1zM188 614h1v1h-1zM562 603h1v1h-1zM96 607h1v1h-1zM98 642h1v1h-1zM359 604h1v1h-1zM281 602h1v1h-1zM620 581h1v1h-1zM420 578h1v1h-1zM417 587h1v1h-1zM146 612h1v1h-1zM532 571h1v1h-1zM394 608h1v1h-1zM150 601h1v1h-1zM592 577h1v1h-1zM529 581h1v1h-1zM245 610h1v1h-1zM703 589h1v1h-1zM118 605h1v1h-1zM211 594h1v1h-1zM624 573h1v1h-1zM279 610h1v1h-1zM243 627h1v1h-1zM373 605h1v1h-1zM675 596h1v1h-1zM188 620h1v1h-1zM451 590h1v1h-1zM428 613h1v1h-1zM435 580h1v1h-1zM748 575h1v1h-1zM402 614h1v1h-1zM148 612h1v1h-1zM784 574h1v1h-1zM777 564h1v1h-1zM288 620h1v1h-1zM754 568h1v1h-1zM228 635h1v1h-1zM491 611h1v1h-1zM716 571h1v1h-1zM115 601h1v1h-1zM390 600h1v1h-1zM337 578h1v1h-1zM456 565h1v1h-1zM411 580h1v1h-1zM633 571h1v1h-1zM287 597h1v1h-1zM187 608h1v1h-1zM152 598h1v1h-1zM281 597h1v1h-1zM633 598h1v1h-1zM110 610h1v1h-1zM547 600h1v1h-1zM736 596h1v1h-1zM965 567h1v1h-1zM681 584h1v1h-1zM283 596h1v1h-1zM665 597h1v1h-1zM198 604h1v1h-1zM104 624h1v1h-1zM311 613h1v1h-1zM695 558h1v1h-1zM196 613h1v1h-1zM152 612h1v1h-1zM720 572h1v1h-1zM162 621h1v1h-1zM979 552h1v1h-1zM938 582h1v1h-1zM533 592h1v1h-1zM424 611h1v1h-1zM128 605h1v1h-1zM861 588h1v1h-1z"/><path fill="#ff0000" d="M74 648h1v1h-1zM265 608h1v1h-1zM153 625h1v1h-1zM473 606h1v1h-1zM212 622h1v1h-1zM306 613h1v1h-1zM636 575h1v1h-1zM328 605h1v1h-1zM354 591h1v1h-1zM502 587h1v1h-1zM506 586h1v1h-1zM760 580h1v1h-1zM418 600h1v1h-1zM459 584h1v1h-1zM758 554h1v1h-1zM922 579h1v1h-1zM379 593h1v1h-1zM118 608h1v1h-1zM105 630h1v1h-1zM307 607h1v1h-1zM875 556h1v1h-1zM525 589h1v1h-1zM497 606h1v1h-1zM121 628h1v1h-1zM242 604h1v1h-1zM254 616h1v1h-1zM454 591h1v1h-1zM441 614h1v1h-1zM157 601h1v1h-1zM146 618h1v1h-1zM383 601h1v1h-1zM478 570h1v1h-1zM81 606h1v1h-1zM137 617h1v1h-1zM421 585h1v1h-1zM741 576h1v1h-1zM607 573h1v1h-1zM420 616h1v1h-1zM199 594h1v1h-1zM141 619h1v1h-1zM515 585h1v1h-1zM77 635h1v1h-1zM400 604h1v1h-1zM95 624h1v1h-1zM451 595h1v1h-1zM666 606h1v1h-1zM400 590h1v1h-1zM621 583h1v1h-1zM234 617h1v1h-1zM249 614h1v1h-1zM696 601h1v1h-1zM304 590h1v1h-1zM414 582h1v1h-1zM127 600h1v1h-1zM959 557h1v1h-1zM93 609h1v1h-1zM423 581h1v1h-1zM576 606h1v1h-1zM837 552h1v1h-1zM171 617h1v1h-1zM526 603h1v1h-1zM205 595h1v1h-1zM86 637h1v1h-1zM337 580h1v1h-1zM324 590h1v1h-1zM338 585h1v1h-1zM172 625h1v1h-1zM680 568h1v1h-1zM269 600h1v1h-1zM243 614h1v1h-1zM165 615h1v1h-1zM120 636h1v1h-1zM717 594h1v1h-1zM215 589h1v1h-1zM130 643h1v1h-1zM252 597h1v1h-1zM232 590h1v1h-1zM921 545h1v1h-1zM627 593h1v1h-1zM131 613h1v1h-1zM338 595h1v1h-1zM114 633h1v1h-1zM533 564h1v1h-1zM489 594h1v1h-1zM726 559h1v1h-1zM479 583h1v1h-1zM332 612h1v1h-1zM304 594h1v1h-1zM239 587h1v1h-1zM268 611h1v1h-1zM435 611h1v1h-1zM409 594h1v1h-1zM392 595h1v1h-1zM74 621h1v1h-1zM465 582h1v1h-1zM668 561h1v1h-1zM529 602h1v1h-1zM174 631h1v1h-1zM437 590h1v1h-1zM452 610h1v1h-1zM649 567h1v1h-1zM194 598h1v1h-1zM203 601h1v1h-1zM224 609h1v1h-1zM494 600h1v1h-1zM692 571h1v1h-1zM111 605h1v1h-1zM745 577h1v1h-1zM264 598h1v1h-1zM556 571h1v1h-1zM214 599h1v1h-1zM972 574h1v1h-1zM470 595h1v1h-1zM337 611h1v1h-1zM89 606h1v1h-1zM84 627h1v1h-1zM385 611h1v1h-1zM669 583h1v1h-1zM856 584h1v1h-1zM957 579h1v1h-1zM555 602h1v1h-1zM870 546h1v1h-1zM200 612h1v1h-1zM106 607h1v1h-1zM401 583h1v1h-1zM270 623h1v1h-1zM483 583h1v1h-1zM358 618h1v1h-1zM168 598h1v1h-1zM273 589h1v1h-1zM91 603h1v1h-1zM479 583h1v1h-1zM629 607h1v1h-1zM419 578h1v1h-1zM354 607h1v1h-1zM245 590h1v1h-1zM430 586h1v1h-1zM823 588h1v1h-1zM160 604h1v1h-1zM140 618h1v1h-1zM515 588h1v1h-1zM205 597h1v1h-1zM182 633h1v1h-1zM91 646h1v1h-1z"/><path fill="#ffff00" d="M355 600h1v1h-1zM278 589h1v1h-1zM209 619h1v1h-1zM180 628h1v1h-1zM809 572h1v1h-1zM404 602h1v1h-1zM217 631h1v1h-1zM667 578h1v1h-1zM804 557h1v1h-1zM803 555h1v1h-1zM402 579h1v1h-1zM361 614h1v1h-1zM136 618h1v1h-1zM83 624h1v1h-1zM219 601h1v1h-1zM681 578h1v1h-1zM472 611h1v1h-1zM484 578h1v1h-1zM255 630h1v1h-1zM864 564h1v1h-1zM195 616h1v1h-1zM148 627h1v1h-1zM274 629h1v1h-1zM791 595h1v1h-1zM789 553h1v1h-1zM673 562h1v1h-1zM382 614h1v1h-1zM983 568h1v1h-1zM109 618h1v1h-1zM146 615h1v1h-1zM108 624h1v1h-1zM259 594h1v1h-1zM537 589h1v1h-1zM370 579h1v1h-1zM610 567h1v1h-1zM710 558h1v1h-1zM544 601h1v1h-1zM778 577h1v1h-1zM631 578h1v1h-1zM166 617h1v1h-1zM264 596h1v1h-1zM325 588h1v1h-1zM677 598h1v1h-1zM644 576h1v1h-1zM473 579h1v1h-1zM621 578h1v1h-1zM201 622h1v1h-1zM535 562h1v1h-1zM783 564h1v1h-1zM438 577h1v1h-1zM914 559h1v1h-1zM266 615h1v1h-1zM245 590h1v1h-1zM294 620h1v1h-1zM287 603h1v1h-1zM655 558h1v1h-1zM467 587h1v1h-1zM113 629h1v1h-1zM109 599h1v1h-1zM288 607h1v1h-1zM838 581h1v1h-1zM210 636h1v1h-1zM452 593h1v1h-1zM745 574h1v1h-1zM971 563h1v1h-1zM723 581h1v1h-1zM392 614h1v1h-1zM764 590h1v1h-1zM226 601h1v1h-1zM253 597h1v1h-1zM156 623h1v1h-1zM750 550h1v1h-1zM543 602h1v1h-1zM410 607h1v1h-1zM963 551h1v1h-1zM490 572h1v1h-1zM493 569h1v1h-1zM626 583h1v1h-1zM950 551h1v1h-1zM609 568h1v1h-1zM620 578h1v1h-1zM530 615h1v1h-1zM402 614h1v1h-1zM366 613h1v1h-1zM689 558h1v1h-1zM715 582h1v1h-1zM224 618h1v1h-1zM121 632h1v1h-1zM163 622h1v1h-1zM885 561h1v1h-1zM101 646h1v1h-1zM140 626h1v1h-1zM428 584h1v1h-1zM190 624h1v1h-1zM811 568h1v1h-1zM450 571h1v1h-1zM130 611h1v1h-1zM224 623h1v1h-1zM294 613h1v1h-1zM155 607h1v1h-1zM118 608h1v1h-1zM528 591h1v1h-1zM231 597h1v1h-1zM497 603h1v1h-1zM438 586h1v1h-1zM599 575h1v1h-1zM279 615h1v1h-1zM297 604h1v1h-1zM393 605h1v1h-1zM201 634h1v1h-1zM817 592h1v1h-1zM694 576h1v1h-1zM83 615h1v1h-1zM368 583h1v1h-1zM89 629h1v1h-1zM764 558h1v1h-1zM76 637h1v1h-1zM109 627h1v1h-1zM87 629h1v1h-1zM91 646h1v1h-1zM278 589h1v1h-1zM136 604h1v1h-1zM461 593h1v1h-1zM221 605h1v1h-1zM113 601h1v1h-1zM200 619h1v1h-1zM672 567h1v1h-1zM376 607h1v1h-1zM303 587h1v1h-1zM382 589h1v1h-1zM185 627h1v1h-1zM341 600h1v1h-1zM384 594h1v1h-1zM238 621h1v1h-1zM365 461h1v1h-1z"/><path fill="#0a80ff" d="M199 593h1v1h-1zM629 543h1v1h-1zM634 520h1v1h-1zM366 528h1v1h-1zM365 553h1v1h-1zM671 495h1v1h-1zM533 516h1v1h-1zM170 553h1v1h-1zM303 547h1v1h-1zM90 534h1v1h-1zM198 561h1v1h-1zM245 515h1v1h-1zM643 522h1v1h-1zM519 567h1v1h-1zM481 553h1v1h-1zM114 551h1v1h-1zM114 590h1v1h-1zM653 559h1v1h-1zM122 574h1v1h-1zM320 579h1v1h-1zM132 524h1v1h-1zM464 529h1v1h-1zM527 541h1v1h-1zM225 584h1v1h-1zM140 559h1v1h-1zM215 529h1v1h-1zM788 530h1v1h-1zM335 570h1v1h-1zM336 536h1v1h-1zM256 563h1v1h-1zM177 531h1v1h-1zM170 538h1v1h-1zM186 585h1v1h-1zM389 560h1v1h-1zM382 530h1v1h-1zM267 534h1v1h-1zM515 518h1v1h-1zM431 541h1v1h-1zM86 598h1v1h-1zM444 572h1v1h-1zM73 551h1v1h-1zM277 574h1v1h-1zM105 563h1v1h-1zM163 590h1v1h-1zM341 544h1v1h-1zM771 551h1v1h-1zM80 545h1v1h-1zM293 512h1v1h-1zM419 577h1v1h-1zM94 544h1v1h-1zM92 585h1v1h-1zM347 566h1v1h-1zM233 553h1v1h-1zM78 551h1v1h-1zM674 559h1v1h-1zM607 522h1v1h-1zM72 581h1v1h-1zM83 530h1v1h-1zM109 559h1v1h-1zM353 552h1v1h-1zM712 543h1v1h-1zM129 591h1v1h-1zM152 586h1v1h-1zM460 541h1v1h-1zM585 498h1v1h-1zM345 544h1v1h-1zM425 531h1v1h-1zM158 584h1v1h-1zM213 536h1v1h-1zM272 577h1v1h-1zM133 601h1v1h-1zM577 549h1v1h-1zM291 531h1v1h-1zM706 537h1v1h-1zM238 569h1v1h-1zM201 573h1v1h-1zM295 523h1v1h-1zM278 517h1v1h-1zM514 548h1v1h-1zM114 584h1v1h-1zM823 512h1v1h-1zM433 550h1v1h-1zM203 552h1v1h-1zM614 515h1v1h-1zM269 542h1v1h-1zM431 522h1v1h-1zM108 537h1v1h-1zM664 504h1v1h-1zM268 514h1v1h-1zM175 540h1v1h-1zM451 559h1v1h-1zM624 512h1v1h-1zM77 551h1v1h-1zM271 544h1v1h-1zM190 575h1v1h-1zM358 564h1v1h-1zM483 541h1v1h-1zM322 561h1v1h-1zM498 532h1v1h-1zM396 572h1v1h-1zM284 555h1v1h-1zM496 546h1v1h-1zM825 547h1v1h-1zM263 520h1v1h-1zM289 555h1v1h-1zM125 589h1v1h-1zM119 585h1v1h-1zM420 545h1v1h-1zM400 527h1v1h-1zM78 567h1v1h-1zM232 539h1v1h-1zM334 554h1v1h-1zM422 549h1v1h-1zM718 515h1v1h-1zM165 555h1v1h-1zM279 581h1v1h-1zM217 570h1v1h-1zM363 568h1v1h-1zM146 534h1v1h-1zM194 584h1v1h-1zM392 522h1v1h-1zM383 534h1v1h-1zM393 514h1v1h-1zM548 508h1v1h-1zM677 506h1v1h-1zM507 557h1v1h-1zM154 580h1v1h-1zM516 521h1v1h-1zM550 563h1v1h-1zM523 514h1v1h-1zM392 570h1v1h-1zM202 582h1v1h-1zM312 554h1v1h-1zM642 512h1v1h-1zM335 532h1v1h-1zM93 550h1v1h-1zM363 548h1v1h-1zM104 551h1v1h-1zM231 583h1v1h-1zM434 540h1v1h-1zM500 512h1v1h-1zM86 545h1v1h-1zM155 551h1v1h-1zM574 508h1v1h-1zM104 539h1v1h-1zM139 534h1v1h-1zM215 547h1v1h-1zM204 587h1v1h-1zM446 528h1v1h-1zM724 556h1v1h-1zM75 602h1v1h-1zM90 542h1v1h-1zM224 590h1v1h-1zM702 503h1v1h-1zM178 583h1v1h-1zM336 569h1v1h-1zM462 531h1v1h-1zM262 579h1v1h-1zM104 554h1v1h-1zM518 573h1v1h-1zM117 577h1v1h-1zM354 531h1v1h-1zM103 565h1v1h-1zM385 572h1v1h-1zM115 571h1v1h-1zM802 510h1v1h-1zM251 580h1v1h-1zM661 513h1v1h-1zM250 556h1v1h-1zM169 552h1v1h-1zM128 541h1v1h-1zM885 530h1v1h-1zM457 523h1v1h-1zM100 603h1v1h-1zM410 541h1v1h-1zM109 553h1v1h-1zM649 536h1v1h-1zM86 554h1v1h-1zM539 520h1v1h-1zM86 609h1v1h-1zM75 560h1v1h-1zM225 579h1v1h-1zM158 547h1v1h-1zM344 575h1v1h-1zM82 534h1v1h-1zM395 517h1v1h-1zM351 544h1v1h-1zM626 546h1v1h-1zM166 588h1v1h-1zM226 527h1v1h-1zM123 524h1v1h-1zM402 540h1v1h-1zM538 554h1v1h-1zM75 533h1v1h-1zM384 543h1v1h-1zM697 547h1v1h-1zM91 570h1v1h-1zM311 529h1v1h-1zM787 502h1v1h-1zM128 564h1v1h-1zM604 539h1v1h-1zM699 544h1v1h-1zM369 556h1v1h-1zM270 559h1v1h-1zM177 551h1v1h-1zM100 578h1v1h-1zM307 572h1v1h-1zM530 514h1v1h-1zM140 584h1v1h-1zM661 546h1v1h-1zM148 593h1v1h-1zM285 525h1v1h-1zM797 549h1v1h-1zM459 518h1v1h-1zM644 556h1v1h-1zM221 553h1v1h-1zM231 545h1v1h-1zM334 568h1v1h-1zM223 535h1v1h-1zM186 584h1v1h-1zM239 540h1v1h-1zM150 556h1v1h-1zM504 563h1v1h-1zM342 520h1v1h-1zM286 554h1v1h-1zM400 553h1v1h-1zM405 509h1v1h-1zM192 545h1v1h-1zM257 585h1v1h-1zM263 541h1v1h-1zM480 571h1v1h-1zM246 539h1v1h-1zM351 520h1v1h-1zM410 575h1v1h-1zM132 567h1v1h-1zM396 569h1v1h-1zM156 589h1v1h-1zM279 582h1v1h-1zM423 517h1v1h-1zM639 543h1v1h-1zM72 539h1v1h-1zM782 551h1v1h-1z"/><path fill="#00f0f0" d="M195 582h1v1h-1zM525 556h1v1h-1zM523 578h1v1h-1zM403 560h1v1h-1zM72 614h1v1h-1zM213 583h1v1h-1zM610 528h1v1h-1zM389 586h1v1h-1zM213 590h1v1h-1zM735 544h1v1h-1zM527 573h1v1h-1zM627 518h1v1h-1zM522 522h1v1h-1zM169 600h1v1h-1zM601 549h1v1h-1zM234 578h1v1h-1zM790 549h1v1h-1zM123 602h1v1h-1zM143 572h1v1h-1zM691 565h1v1h-1zM327 541h1v1h-1zM237 593h1v1h-1zM333 558h1v1h-1zM85 617h1v1h-1zM603 587h1v1h-1zM569 542h1v1h-1zM702 555h1v1h-1zM147 544h1v1h-1zM455 583h1v1h-1zM95 608h1v1h-1zM841 552h1v1h-1zM316 585h1v1h-1zM151 546h1v1h-1zM175 573h1v1h-1zM668 523h1v1h-1zM231 531h1v1h-1zM364 579h1v1h-1zM575 544h1v1h-1zM348 585h1v1h-1zM405 546h1v1h-1zM482 573h1v1h-1zM394 572h1v1h-1zM316 607h1v1h-1zM375 573h1v1h-1zM115 626h1v1h-1zM151 622h1v1h-1zM611 547h1v1h-1zM103 600h1v1h-1zM607 527h1v1h-1zM202 602h1v1h-1zM567 542h1v1h-1zM397 589h1v1h-1zM223 600h1v1h-1zM494 589h1v1h-1zM115 591h1v1h-1zM255 593h1v1h-1zM256 571h1v1h-1zM403 515h1v1h-1zM483 581h1v1h-1zM770 557h1v1h-1zM288 582h1v1h-1zM663 557h1v1h-1zM475 574h1v1h-1zM837 553h1v1h-1zM693 522h1v1h-1zM163 621h1v1h-1zM467 523h1v1h-1zM143 593h1v1h-1zM675 564h1v1h-1zM97 591h1v1h-1zM880 573h1v1h-1zM163 590h1v1h-1zM809 550h1v1h-1zM384 561h1v1h-1zM484 594h1v1h-1zM84 602h1v1h-1zM442 533h1v1h-1zM633 576h1v1h-1zM557 561h1v1h-1zM313 571h1v1h-1zM530 538h1v1h-1zM81 585h1v1h-1zM421 579h1v1h-1zM441 558h1v1h-1zM292 610h1v1h-1zM553 587h1v1h-1zM497 565h1v1h-1zM758 537h1v1h-1zM166 597h1v1h-1zM200 590h1v1h-1zM154 575h1v1h-1zM214 557h1v1h-1zM617 546h1v1h-1zM554 524h1v1h-1zM217 597h1v1h-1zM279 614h1v1h-1zM767 562h1v1h-1zM110 548h1v1h-1zM303 543h1v1h-1zM81 577h1v1h-1zM387 584h1v1h-1zM368 548h1v1h-1zM120 614h1v1h-1zM554 542h1v1h-1zM186 558h1v1h-1zM278 547h1v1h-1zM399 583h1v1h-1zM411 551h1v1h-1zM157 541h1v1h-1zM204 563h1v1h-1zM971 509h1v1h-1zM353 587h1v1h-1zM144 553h1v1h-1zM110 620h1v1h-1zM371 603h1v1h-1zM446 583h1v1h-1zM183 594h1v1h-1zM461 598h1v1h-1zM179 564h1v1h-1zM940 544h1v1h-1zM517 564h1v1h-1zM75 610h1v1h-1zM373 521h1v1h-1zM255 590h1v1h-1zM80 609h1v1h-1zM452 563h1v1h-1zM742 548h1v1h-1z"/><path fill="#00ff00" d="M561 569h1v1h-1zM706 597h1v1h-1zM378 618h1v1h-1zM383 619h1v1h-1zM308 611h1v1h-1zM726 564h1v1h-1zM900 548h1v1h-1zM451 602h1v1h-1zM428 574h1v1h-1zM283 628h1v1h-1zM931 544h1v1h-1zM802 570h1v1h-1zM665 593h1v1h-1zM491 591h1v1h-1zM710 572h1v1h-1zM282 624h1v1h-1zM758 595h1v1h-1zM225 595h1v1h-1zM115 633h1v1h-1zM534 578h1v1h-1zM81 628h1v1h-1zM501 586h1v1h-1zM490 581h1v1h-1zM285 602h1v1h-1zM327 604h1v1h-1zM156 605h1v1h-1zM262 619h1v1h-1zM722 560h1v1h-1zM378 590h1v1h-1zM478 605h1v1h-1zM516 610h1v1h-1zM435 593h1v1h-1zM805 544h1v1h-1zM447 578h1v1h-1zM330 609h1v1h-1zM492 609h1v1h-1zM204 620h1v1h-1zM498 612h1v1h-1zM124 598h1v1h-1zM233 599h1v1h-1zM230 608h1v1h-1zM207 625h1v1h-1zM131 634h1v1h-1zM327 623h1v1h-1zM767 587h1v1h-1zM673 580h1v1h-1zM315 580h1v1h-1zM663 588h1v1h-1zM130 621h1v1h-1zM127 615h1v1h-1zM967 563h1v1h-1zM635 604h1v1h-1zM91 614h1v1h-1zM404 590h1v1h-1zM159 636h1v1h-1zM231 613h1v1h-1zM281 602h1v1h-1zM401 619h1v1h-1zM321 613h1v1h-1zM336 585h1v1h-1zM459 610h1v1h-1zM473 593h1v1h-1zM122 598h1v1h-1zM868 583h1v1h-1zM725 573h1v1h-1zM135 601h1v1h-1zM150 638h1v1h-1zM378 594h1v1h-1zM547 575h1v1h-1zM165 634h1v1h-1zM273 599h1v1h-1zM192 633h1v1h-1zM401 607h1v1h-1zM416 602h1v1h-1zM877 571h1v1h-1zM76 637h1v1h-1zM152 627h1v1h-1zM537 610h1v1h-1zM677 556h1v1h-1zM350 621h1v1h-1zM284 613h1v1h-1zM367 597h1v1h-1zM688 571h1v1h-1zM930 563h1v1h-1zM482 612h1v1h-1zM318 620h1v1h-1zM286 610h1v1h-1zM247 606h1v1h-1zM194 621h1v1h-1zM307 593h1v1h-1zM765 583h1v1h-1zM590 595h1v1h-1zM169 600h1v1h-1zM127 630h1v1h-1zM465 571h1v1h-1zM665 601h1v1h-1zM400 606h1v1h-1zM489 604h1v1h-1zM351 585h1v1h-1zM168 636h1v1h-1zM700 563h1v1h-1zM578 572h1v1h-1zM303 590h1v1h-1zM134 612h1v1h-1zM290 605h1v1h-1zM837 583h1v1h-1zM75 625h1v1h-1zM354 589h1v1h-1zM122 639h1v1h-1zM577 566h1v1h-1zM109 623h1v1h-1zM363 579h1v1h-1zM74 646h1v1h-1zM535 574h1v1h-1zM425 610h1v1h-1zM284 607h1v1h-1zM394 612h1v1h-1zM206 630h1v1h-1zM551 593h1v1h-1zM364 592h1v1h-1zM176 632h1v1h-1zM230 609h1v1h-1zM132 615h1v1h-1zM263 616h1v1h-1zM109 634h1v1h-1zM467 611h1v1h-1zM276 624h1v1h-1zM483 593h1v1h-1zM308 599h1v1h-1zM213 594h1v1h-1zM363 587h1v1h-1zM110 612h1v1h-1zM463 609h1v1h-1z"/><path fill="#ff0000" d="M161 616h1v1h-1zM742 554h1v1h-1zM292 594h1v1h-1zM85 635h1v1h-1zM199 596h1v1h-1zM334 608h1v1h-1zM82 636h1v1h-1zM250 603h1v1h-1zM137 621h1v1h-1zM504 605h1v1h-1zM228 622h1v1h-1zM495 589h1v1h-1zM330 618h1v1h-1zM228 622h1v1h-1zM510 580h1v1h-1zM578 604h1v1h-1zM708 583h1v1h-1zM553 573h1v1h-1zM348 581h1v1h-1zM764 592h1v1h-1zM156 599h1v1h-1zM692 568h1v1h-1zM455 575h1v1h-1zM102 626h1v1h-1zM424 610h1v1h-1zM123 634h1v1h-1zM892 564h1v1h-1zM200 636h1v1h-1zM255 593h1v1h-1zM123 631h1v1h-1zM335 607h1v1h-1zM169 611h1v1h-1zM256 622h1v1h-1zM741 590h1v1h-1zM717 558h1v1h-1zM473 613h1v1h-1zM190 636h1v1h-1zM750 569h1v1h-1zM662 566h1v1h-1zM856 580h1v1h-1zM771 580h1v1h-1zM321 620h1v1h-1zM145 612h1v1h-1zM488 580h1v1h-1zM193 626h1v1h-1zM357 607h1v1h-1zM463 580h1v1h-1zM205 594h1v1h-1zM655 562h1v1h-1zM155 617h1v1h-1zM235 619h1v1h-1zM388 588h1v1h-1zM279 607h1v1h-1zM256 602h1v1h-1zM647 561h1v1h-1zM538 607h1v1h-1zM338 583h1v1h-1zM742 588h1v1h-1zM203 622h1v1h-1zM578 596h1v1h-1zM245 603h1v1h-1zM529 586h1v1h-1zM486 588h1v1h-1zM816 559h1v1h-1zM378 611h1v1h-1zM712 595h1v1h-1zM168 608h1v1h-1zM150 623h1v1h-1zM628 577h1v1h-1zM816 551h1v1h-1zM391 602h1v1h-1zM217 612h1v1h-1zM185 595h1v1h-1zM124 629h1v1h-1zM368 597h1v1h-1zM681 564h1v1h-1zM177 611h1v1h-1zM196 630h1v1h-1zM575 579h1v1h-1zM884 578h1v1h-1zM239 620h1v1h-1zM90 603h1v1h-1zM752 600h1v1h-1zM502 610h1v1h-1zM176 619h1v1h-1zM479 598h1v1h-1zM514 573h1v1h-1zM590 563h1v1h-1zM425 576h1v1h-1zM557 591h1v1h-1zM705 562h1v1h-1zM103 631h1v1h-1zM923 579h1v1h-1zM394 601h1v1h-1zM314 603h1v1h-1zM184 609h1v1h-1zM496 569h1v1h-1zM715 568h1v1h-1zM123 624h1v1h-1zM749 560h1v1h-1zM196 588h1v1h-1zM570 604h1v1h-1zM601 590h1v1h-1zM428 605h1v1h-1zM309 588h1v1h-1zM616 592h1v1h-1zM334 587h1v1h-1zM486 613h1v1h-1zM167 615h1v1h-1zM345 580h1v1h-1zM705 592h1v1h-1zM512 590h1v1h-1zM344 587h1v1h-1zM437 580h1v1h-1zM627 588h1v1h-1zM509 609h1v1h-1zM276 607h1v1h-1zM172 633h1v1h-1zM181 625h1v1h-1zM421 592h1v1h-1zM336 616h1v1h-1zM205 627h1v1h-1zM222 623h1v1h-1zM325 587h1v1h-1zM210 607h1v1h-1zM295 596h1v1h-1zM180 611h1v1h-1zM505 577h1v1h-1zM602 569h1v1h-1zM121 616h1v1h-1zM357 614h1v1h-1zM806 559h1v1h-1zM217 629h1v1h-1zM80 628h1v1h-1zM73 609h1v1h-1zM682 560h1v1h-1zM908 547h1v1h-1zM759 562h1v1h-1zM531 565h1v1h-1zM877 585h1v1h-1zM150 623h1v1h-1zM298 626h1v1h-1zM132 607h1v1h-1zM180 436h1v1h-1z"/><path fill="#ffff00" d="M260 611h1v1h-1zM457 579h1v1h-1zM146 631h1v1h-1zM634 582h1v1h-1zM482 581h1v1h-1zM522 609h1v1h-1zM185 616h1v1h-1zM668 574h1v1h-1zM827 590h1v1h-1zM749 561h1v1h-1zM131 599h1v1h-1zM331 620h1v1h-1zM88 609h1v1h-1zM564 574h1v1h-1zM253 613h1v1h-1zM603 605h1v1h-1zM514 602h1v1h-1zM107 611h1v1h-1zM297 611h1v1h-1zM121 625h1v1h-1zM469 614h1v1h-1zM496 589h1v1h-1zM845 564h1v1h-1zM103 618h1v1h-1zM694 600h1v1h-1zM676 557h1v1h-1zM903 553h1v1h-1zM240 619h1v1h-1zM143 629h1v1h-1zM340 625h1v1h-1zM313 615h1v1h-1zM457 598h1v1h-1zM707 571h1v1h-1zM205 596h1v1h-1zM395 595h1v1h-1zM506 575h1v1h-1zM465 600h1v1h-1zM417 591h1v1h-1zM218 604h1v1h-1zM629 570h1v1h-1zM648 583h1v1h-1zM80 638h1v1h-1zM296 606h1v1h-1zM329 589h1v1h-1zM134 602h1v1h-1zM224 606h1v1h-1zM125 607h1v1h-1zM622 577h1v1h-1zM113 604h1v1h-1zM239 611h1v1h-1zM237 626h1v1h-1zM679 593h1v1h-1zM397 601h1v1h-1zM648 559h1v1h-1zM609 599h1v1h-1zM365 619h1v1h-1zM418 605h1v1h-1zM561 575h1v1h-1zM95 639h1v1h-1zM158 610h1v1h-1zM927 571h1v1h-1zM385 577h1v1h-1zM288 586h1v1h-1zM840 571h1v1h-1zM412 572h1v1h-1zM291 610h1v1h-1zM304 588h1v1h-1zM378 626h1v1h-1zM278 602h1v1h-1zM338 617h1v1h-1zM446 580h1v1h-1zM260 615h1v1h-1zM425 584h1v1h-1zM663 559h1v1h-1zM154 611h1v1h-1zM695 583h1v1h-1zM545 588h1v1h-1zM363 615h1v1h-1zM718 567h1v1h-1zM630 582h1v1h-1zM459 603h1v1h-1zM439 606h1v1h-1zM536 606h1v1h-1zM184 630h1v1h-1zM280 609h1v1h-1zM817 556h1v1h-1zM261 602h1v1h-1zM465 581h1v1h-1zM560 610h1v1h-1zM277 614h1v1h-1zM126 619h1v1h-1zM239 610h1v1h-1zM492 577h1v1h-1zM255 613h1v1h-1zM396 616h1v1h-1zM191 637h1v1h-1zM629 571h1v1h-1zM788 593h1v1h-1zM718 598h1v1h-1zM928 536h1v1h-1zM724 565h1v1h-1zM318 621h1v1h-1zM150 602h1v1h-1zM739 550h1v1h-1zM488 595h1v1h-1zM197 607h1v1h-1zM335 609h1v1h-1zM757 565h1v1h-1zM282 606h1v1h-1zM484 602h1v1h-1zM155 610h1v1h-1zM916 544h1v1h-1zM239 607h1v1h-1zM172 635h1v1h-1zM104 625h1v1h-1zM531 586h1v1h-1zM160 611h1v1h-1zM556 580h1v1h-1zM381 617h1v1h-1zM118 617h1v1h-1zM539 573h1v1h-1zM194 633h1v1h-1zM384 589h1v1h-1zM147 634h1v1h-1zM393 596h1v1h-1zM318 599h1v1h-1zM311 593h1v1h-1zM242 612h1v1h-1zM74 609h1v1h-1zM275 621h1v1h-1zM94 637h1v1h-1zM225 603h1v1h-1zM178 595h1v1h-1zM448 223h1v1h-1zM432 387h1v1h-1z"/><path fill="#0a80ff" d="M153 540h1v1h-1zM112 545h1v1h-1zM320 566h1v1h-1zM214 530h1v1h-1zM149 599h1v1h-1zM755 503h1v1h-1zM84 586h1v1h-1zM203 536h1v1h-1zM805 547h1v1h-1zM85 539h1v1h-1zM140 569h1v1h-1zM300 555h1v1h-1zM387 516h1v1h-1zM479 552h1v1h-1zM279 581h1v1h-1zM216 576h1v1h-1zM89 546h1v1h-1zM328 533h1v1h-1zM560 540h1v1h-1zM251 550h1v1h-1zM519 511h1v1h-1zM193 521h1v1h-1zM814 515h1v1h-1zM399 546h1v1h-1zM249 556h1v1h-1zM299 554h1v1h-1zM93 550h1v1h-1zM564 512h1v1h-1zM187 571h1v1h-1zM647 517h1v1h-1zM94 549h1v1h-1zM76 562h1v1h-1zM375 577h1v1h-1zM454 571h1v1h-1zM725 533h1v1h-1zM158 587h1v1h-1zM538 551h1v1h-1zM221 526h1v1h-1zM73 551h1v1h-1zM441 569h1v1h-1zM141 584h1v1h-1zM715 500h1v1h-1zM346 554h1v1h-1zM661 536h1v1h-1zM345 538h1v1h-1zM199 568h1v1h-1zM334 537h1v1h-1zM96 601h1v1h-1zM168 535h1v1h-1zM532 529h1v1h-1zM343 540h1v1h-1zM174 577h1v1h-1zM134 585h1v1h-1zM145 572h1v1h-1zM75 571h1v1h-1zM824 516h1v1h-1zM283 540h1v1h-1zM444 552h1v1h-1zM461 560h1v1h-1zM383 518h1v1h-1zM269 560h1v1h-1zM344 534h1v1h-1zM364 542h1v1h-1zM302 540h1v1h-1zM442 567h1v1h-1zM660 504h1v1h-1zM78 571h1v1h-1zM182 582h1v1h-1zM216 589h1v1h-1zM181 546h1v1h-1zM75 601h1v1h-1zM249 583h1v1h-1zM470 523h1v1h-1zM204 542h1v1h-1zM743 513h1v1h-1zM437 517h1v1h-1zM385 546h1v1h-1zM109 557h1v1h-1zM136 586h1v1h-1zM118 519h1v1h-1zM463 533h1v1h-1zM448 553h1v1h-1zM146 518h1v1h-1zM707 556h1v1h-1zM911 499h1v1h-1zM184 539h1v1h-1zM72 575h1v1h-1zM190 550h1v1h-1zM751 557h1v1h-1zM204 553h1v1h-1zM357 522h1v1h-1zM300 514h1v1h-1zM145 583h1v1h-1zM241 530h1v1h-1zM565 555h1v1h-1zM75 553h1v1h-1zM541 555h1v1h-1zM136 586h1v1h-1zM168 555h1v1h-1zM783 538h1v1h-1zM144 545h1v1h-1zM218 519h1v1h-1zM250 532h1v1h-1zM182 574h1v1h-1zM325 533h1v1h-1zM640 495h1v1h-1zM162 522h1v1h-1zM588 506h1v1h-1zM297 555h1v1h-1zM145 586h1v1h-1zM858 503h1v1h-1zM105 573h1v1h-1zM246 580h1v1h-1zM428 523h1v1h-1zM354 544h1v1h-1zM227 584h1v1h-1zM773 504h1v1h-1zM270 553h1v1h-1zM708 560h1v1h-1zM143 566h1v1h-1zM836 536h1v1h-1zM162 583h1v1h-1zM668 522h1v1h-1zM200 586h1v1h-1zM159 548h1v1h-1zM114 568h1v1h-1zM722 533h1v1h-1zM505 541h1v1h-1zM415 528h1v1h-1zM164 577h1v1h-1zM188 585h1v1h-1zM386 547h1v1h-1zM733 509h1v1h-1zM93 570h1v1h-1zM195 517h1v1h-1zM297 567h1v1h-1zM599 509h1v1h-1zM548 523h1v1h-1zM214 534h1v1h-1zM447 538h1v1h-1zM267 529h1v1h-1zM661 539h1v1h-1zM706 545h1v1h-1zM218 538h1v1h-1zM695 546h1v1h-1zM316 588h1v1h-1zM319 546h1v1h-1zM430 507h1v1h-1zM347 523h1v1h-1zM611 501h1v1h-1zM292 537h1v1h-1zM487 512h1v1h-1zM502 541h1v1h-1zM301 585h1v1h-1zM254 541h1v1h-1zM482 548h1v1h-1zM655 502h1v1h-1zM131 545h1v1h-1zM192 573h1v1h-1zM426 550h1v1h-1zM444 533h1v1h-1zM334 546h1v1h-1zM460 516h1v1h-1zM515 555h1v1h-1zM198 563h1v1h-1zM637 559h1v1h-1zM75 603h1v1h-1zM163 573h1v1h-1zM410 551h1v1h-1zM706 532h1v1h-1zM311 586h1v1h-1zM76 553h1v1h-1zM422 556h1v1h-1zM522 538h1v1h-1zM361 523h1v1h-1zM149 568h1v1h-1zM538 551h1v1h-1zM151 588h1v1h-1zM715 515h1v1h-1zM543 550h1v1h-1zM128 597h1v1h-1zM426 552h1v1h-1zM372 521h1v1h-1zM317 547h1v1h-1zM138 584h1v1h-1zM273 519h1v1h-1zM597 507h1v1h-1zM103 567h1v1h-1zM779 506h1v1h-1zM296 562h1v1h-1zM547 565h1v1h-1zM176 525h1v1h-1zM125 585h1v1h-1zM677 523h1v1h-1zM580 513h1v1h-1zM130 582h1v1h-1zM181 584h1v1h-1zM262 563h1v1h-1zM270 540h1v1h-1zM606 504h1v1h-1zM123 533h1v1h-1zM213 590h1v1h-1zM786 496h1v1h-1zM153 586h1v1h-1zM128 557h1v1h-1zM305 564h1v1h-1zM200 545h1v1h-1zM521 566h1v1h-1zM237 521h1v1h-1zM390 554h1v1h-1zM793 525h1v1h-1zM587 516h1v1h-1zM605 554h1v1h-1zM237 538h1v1h-1zM758 516h1v1h-1zM763 528h1v1h-1zM664 514h1v1h-1zM768 500h1v1h-1zM78 592h1v1h-1zM437 512h1v1h-1zM582 539h1v1h-1zM463 510h1v1h-1zM644 543h1v1h-1zM495 530h1v1h-1zM614 525h1v1h-1zM384 537h1v1h-1zM321 553h1v1h-1zM656 510h1v1h-1zM166 533h1v1h-1zM323 581h1v1h-1zM90 569h1v1h-1zM387 530h1v1h-1zM236 581h1v1h-1zM129 555h1v1h-1zM148 552h1v1h-1zM293 581h1v1h-1zM332 497h1v1h-1zM138 518h1v1h-1zM289 546h1v1h-1zM112 589h1v1h-1zM114 531h1v1h-1zM288 584h1v1h-1z"/><path fill="#00f0f0" d="M384 571h1v1h-1zM313 543h1v1h-1zM382 554h1v1h-1zM396 583h1v1h-1zM468 580h1v1h-1zM98 552h1v1h-1zM272 572h1v1h-1zM730 555h1v1h-1zM768 514h1v1h-1zM596 567h1v1h-1zM802 564h1v1h-1zM80 617h1v1h-1zM488 541h1v1h-1zM694 526h1v1h-1zM167 601h1v1h-1zM303 556h1v1h-1zM402 596h1v1h-1zM234 579h1v1h-1zM217 542h1v1h-1zM430 561h1v1h-1zM736 549h1v1h-1zM323 571h1v1h-1zM166 602h1v1h-1zM98 527h1v1h-1zM215 556h1v1h-1zM519 575h1v1h-1zM329 522h1v1h-1zM349 606h1v1h-1zM764 526h1v1h-1zM493 543h1v1h-1zM328 588h1v1h-1zM317 555h1v1h-1zM840 551h1v1h-1zM167 590h1v1h-1zM244 599h1v1h-1zM150 536h1v1h-1zM101 541h1v1h-1zM265 588h1v1h-1zM142 583h1v1h-1zM672 509h1v1h-1zM668 561h1v1h-1zM512 573h1v1h-1zM439 575h1v1h-1zM233 559h1v1h-1zM459 525h1v1h-1zM224 580h1v1h-1zM425 577h1v1h-1zM180 563h1v1h-1zM180 573h1v1h-1zM696 525h1v1h-1zM772 571h1v1h-1zM607 550h1v1h-1zM629 587h1v1h-1zM236 530h1v1h-1zM775 552h1v1h-1zM274 544h1v1h-1zM450 581h1v1h-1zM614 523h1v1h-1zM402 532h1v1h-1zM907 568h1v1h-1zM793 525h1v1h-1zM91 601h1v1h-1zM332 566h1v1h-1zM476 569h1v1h-1zM569 542h1v1h-1zM529 561h1v1h-1zM179 538h1v1h-1zM323 583h1v1h-1zM296 564h1v1h-1zM640 562h1v1h-1zM143 605h1v1h-1zM373 604h1v1h-1zM85 612h1v1h-1zM325 576h1v1h-1zM468 601h1v1h-1zM275 535h1v1h-1zM321 530h1v1h-1zM345 529h1v1h-1zM251 574h1v1h-1zM507 594h1v1h-1zM104 561h1v1h-1zM332 590h1v1h-1zM593 568h1v1h-1zM705 558h1v1h-1zM342 587h1v1h-1zM402 563h1v1h-1zM266 590h1v1h-1zM74 557h1v1h-1zM283 580h1v1h-1zM371 551h1v1h-1zM836 513h1v1h-1zM584 524h1v1h-1zM224 577h1v1h-1zM206 587h1v1h-1zM375 594h1v1h-1zM249 590h1v1h-1zM182 537h1v1h-1zM647 519h1v1h-1zM226 595h1v1h-1zM254 582h1v1h-1zM657 543h1v1h-1zM736 548h1v1h-1zM132 598h1v1h-1zM138 610h1v1h-1zM370 554h1v1h-1zM560 543h1v1h-1zM359 590h1v1h-1zM837 551h1v1h-1zM451 567h1v1h-1zM83 550h1v1h-1zM361 559h1v1h-1zM484 568h1v1h-1zM219 540h1v1h-1zM651 522h1v1h-1zM706 586h1v1h-1zM214 616h1v1h-1zM327 589h1v1h-1zM529 519h1v1h-1zM275 539h1v1h-1zM361 526h1v1h-1zM552 570h1v1h-1zM214 608h1v1h-1zM779 515h1v1h-1zM897 549h1v1h-1zM212 530h1v1h-1zM420 601h1v1h-1zM734 551h1v1h-1z"/><path fill="#00ff00" d="M82 644h1v1h-1zM80 610h1v1h-1zM531 600h1v1h-1zM393 583h1v1h-1zM237 619h1v1h-1zM509 570h1v1h-1zM742 591h1v1h-1zM546 605h1v1h-1zM105 600h1v1h-1zM692 601h1v1h-1zM517 595h1v1h-1zM235 614h1v1h-1zM424 589h1v1h-1zM383 583h1v1h-1zM226 619h1v1h-1zM75 617h1v1h-1zM92 643h1v1h-1zM290 613h1v1h-1zM128 613h1v1h-1zM504 605h1v1h-1zM378 620h1v1h-1zM461 587h1v1h-1zM233 618h1v1h-1zM899 546h1v1h-1zM208 609h1v1h-1zM264 596h1v1h-1zM318 622h1v1h-1zM501 594h1v1h-1zM299 620h1v1h-1zM117 630h1v1h-1zM493 603h1v1h-1zM158 597h1v1h-1zM109 638h1v1h-1zM757 567h1v1h-1zM837 580h1v1h-1zM647 561h1v1h-1zM381 588h1v1h-1zM567 572h1v1h-1zM454 617h1v1h-1zM297 582h1v1h-1zM307 621h1v1h-1zM81 626h1v1h-1zM369 619h1v1h-1zM816 564h1v1h-1zM835 550h1v1h-1zM558 582h1v1h-1zM372 598h1v1h-1zM263 626h1v1h-1zM345 600h1v1h-1zM77 635h1v1h-1zM285 612h1v1h-1zM199 624h1v1h-1zM358 613h1v1h-1zM158 599h1v1h-1zM511 578h1v1h-1zM835 563h1v1h-1zM170 598h1v1h-1zM542 567h1v1h-1zM367 579h1v1h-1zM165 632h1v1h-1zM98 641h1v1h-1zM170 616h1v1h-1zM488 607h1v1h-1zM328 606h1v1h-1zM695 567h1v1h-1zM307 625h1v1h-1zM416 596h1v1h-1zM154 637h1v1h-1zM413 588h1v1h-1zM408 615h1v1h-1zM369 598h1v1h-1zM614 579h1v1h-1zM763 588h1v1h-1zM847 548h1v1h-1zM668 555h1v1h-1zM454 595h1v1h-1zM543 592h1v1h-1zM264 629h1v1h-1zM832 561h1v1h-1zM101 617h1v1h-1zM350 582h1v1h-1zM319 614h1v1h-1zM482 587h1v1h-1zM98 631h1v1h-1zM142 617h1v1h-1zM308 593h1v1h-1zM88 614h1v1h-1zM90 610h1v1h-1zM184 608h1v1h-1zM84 616h1v1h-1zM503 608h1v1h-1zM829 559h1v1h-1zM216 631h1v1h-1zM798 583h1v1h-1zM782 595h1v1h-1zM804 553h1v1h-1zM487 573h1v1h-1zM649 591h1v1h-1zM261 601h1v1h-1zM172 634h1v1h-1zM258 584h1v1h-1zM482 581h1v1h-1zM173 601h1v1h-1zM313 585h1v1h-1zM327 590h1v1h-1zM689 560h1v1h-1zM167 622h1v1h-1zM184 638h1v1h-1zM159 624h1v1h-1zM289 617h1v1h-1zM245 594h1v1h-1zM202 627h1v1h-1zM227 597h1v1h-1zM133 611h1v1h-1zM328 591h1v1h-1zM205 632h1v1h-1zM716 591h1v1h-1zM712 572h1v1h-1zM379 587h1v1h-1zM421 581h1v1h-1zM369 616h1v1h-1zM528 589h1v1h-1zM690 595h1v1h-1zM196 613h1v1h-1zM513 576h1v1h-1zM375 611h1v1h-1zM159 624h1v1h-1zM367 610h1v1h-1zM493 586h1v1h-1zM339 596h1v1h-1zM896 586h1v1h-1zM137 624h1v1h-1zM528 595h1v1h-1z"/><path fill="#ff0000" d="M363 578h1v1h-1zM195 631h1v1h-1zM98 625h1v1h-1zM224 618h1v1h-1zM305 618h1v1h-1zM279 624h1v1h-1zM135 641h1v1h-1zM167 630h1v1h-1zM188 597h1v1h-1zM152 601h1v1h-1zM413 620h1v1h-1zM85 625h1v1h-1zM99 635h1v1h-1zM185 617h1v1h-1zM684 579h1v1h-1zM127 606h1v1h-1zM386 578h1v1h-1zM290 597h1v1h-1zM104 614h1v1h-1zM972 567h1v1h-1zM296 585h1v1h-1zM134 636h1v1h-1zM324 617h1v1h-1zM462 604h1v1h-1zM806 577h1v1h-1zM585 585h1v1h-1zM932 575h1v1h-1zM582 606h1v1h-1zM227 589h1v1h-1zM222 595h1v1h-1zM499 586h1v1h-1zM509 604h1v1h-1zM534 602h1v1h-1zM532 606h1v1h-1zM456 569h1v1h-1zM214 630h1v1h-1zM145 645h1v1h-1zM431 606h1v1h-1zM506 582h1v1h-1zM571 603h1v1h-1zM284 597h1v1h-1zM796 559h1v1h-1zM273 604h1v1h-1zM168 632h1v1h-1zM688 591h1v1h-1zM480 574h1v1h-1zM487 601h1v1h-1zM439 570h1v1h-1zM657 603h1v1h-1zM331 606h1v1h-1zM480 607h1v1h-1zM77 616h1v1h-1zM946 586h1v1h-1zM507 587h1v1h-1zM87 610h1v1h-1zM673 580h1v1h-1zM360 607h1v1h-1zM795 561h1v1h-1zM747 554h1v1h-1zM134 607h1v1h-1zM560 606h1v1h-1zM717 574h1v1h-1zM349 584h1v1h-1zM469 584h1v1h-1zM806 592h1v1h-1zM566 595h1v1h-1zM492 575h1v1h-1zM224 626h1v1h-1zM817 544h1v1h-1zM414 599h1v1h-1zM737 597h1v1h-1zM705 575h1v1h-1zM230 613h1v1h-1zM594 594h1v1h-1zM563 563h1v1h-1zM119 639h1v1h-1zM138 603h1v1h-1zM303 599h1v1h-1zM209 616h1v1h-1zM482 609h1v1h-1zM524 608h1v1h-1zM445 584h1v1h-1zM460 592h1v1h-1zM656 608h1v1h-1zM138 640h1v1h-1zM420 618h1v1h-1zM192 617h1v1h-1zM224 603h1v1h-1zM171 602h1v1h-1zM677 571h1v1h-1zM475 613h1v1h-1zM839 561h1v1h-1zM326 595h1v1h-1zM562 590h1v1h-1zM589 577h1v1h-1zM457 606h1v1h-1zM903 578h1v1h-1zM444 614h1v1h-1zM78 633h1v1h-1zM389 612h1v1h-1zM145 626h1v1h-1zM259 625h1v1h-1zM324 598h1v1h-1zM147 619h1v1h-1zM550 605h1v1h-1zM552 593h1v1h-1zM446 578h1v1h-1zM736 571h1v1h-1zM217 615h1v1h-1zM424 597h1v1h-1zM185 623h1v1h-1zM282 593h1v1h-1zM703 579h1v1h-1zM319 589h1v1h-1zM224 628h1v1h-1zM255 621h1v1h-1zM199 630h1v1h-1zM305 621h1v1h-1zM247 605h1v1h-1zM511 598h1v1h-1zM474 586h1v1h-1zM92 642h1v1h-1zM405 595h1v1h-1zM431 574h1v1h-1zM192 590h1v1h-1zM634 598h1v1h-1zM729 552h1v1h-1zM514 609h1v1h-1zM137 599h1v1h-1zM351 589h1v1h-1zM600 566h1v1h-1zM155 605h1v1h-1zM266 613h1v1h-1zM330 598h1v1h-1zM269 594h1v1h-1zM123 610h1v1h-1zM901 577h1v1h-1zM157 610h1v1h-1zM252 605h1v1h-1zM92 633h1v1h-1zM174 637h1v1h-1zM393 617h1v1h-1zM484 570h1v1h-1z"/><path fill="#ffff00" d="M207 622h1v1h-1zM257 594h1v1h-1zM551 565h1v1h-1zM741 589h1v1h-1zM181 604h1v1h-1zM654 569h1v1h-1zM398 600h1v1h-1zM534 601h1v1h-1zM832 559h1v1h-1zM94 643h1v1h-1zM201 631h1v1h-1zM656 581h1v1h-1zM221 639h1v1h-1zM201 627h1v1h-1zM293 622h1v1h-1zM588 587h1v1h-1zM155 615h1v1h-1zM171 633h1v1h-1zM726 558h1v1h-1zM129 605h1v1h-1zM140 615h1v1h-1zM589 596h1v1h-1zM305 591h1v1h-1zM666 561h1v1h-1zM173 632h1v1h-1zM769 567h1v1h-1zM408 581h1v1h-1zM228 611h1v1h-1zM269 627h1v1h-1zM783 590h1v1h-1zM623 567h1v1h-1zM185 603h1v1h-1zM503 603h1v1h-1zM284 607h1v1h-1zM173 615h1v1h-1zM879 565h1v1h-1zM139 610h1v1h-1zM163 633h1v1h-1zM132 630h1v1h-1zM159 610h1v1h-1zM429 612h1v1h-1zM194 619h1v1h-1zM143 597h1v1h-1zM419 600h1v1h-1zM142 640h1v1h-1zM121 599h1v1h-1zM743 587h1v1h-1zM492 585h1v1h-1zM152 632h1v1h-1zM237 599h1v1h-1zM234 602h1v1h-1zM469 614h1v1h-1zM92 611h1v1h-1zM154 623h1v1h-1zM727 596h1v1h-1zM274 588h1v1h-1zM709 558h1v1h-1zM528 575h1v1h-1zM75 617h1v1h-1zM210 626h1v1h-1zM482 603h1v1h-1zM72 615h1v1h-1zM606 597h1v1h-1zM817 572h1v1h-1zM214 632h1v1h-1zM610 591h1v1h-1zM96 625h1v1h-1zM116 626h1v1h-1zM624 590h1v1h-1zM950 558h1v1h-1zM530 601h1v1h-1zM564 600h1v1h-1zM125 613h1v1h-1zM198 619h1v1h-1zM535 571h1v1h-1zM871 545h1v1h-1zM489 576h1v1h-1zM669 570h1v1h-1zM442 573h1v1h-1zM76 618h1v1h-1zM259 618h1v1h-1zM295 599h1v1h-1zM673 560h1v1h-1zM441 569h1v1h-1zM148 617h1v1h-1zM475 581h1v1h-1zM130 628h1v1h-1zM82 636h1v1h-1zM753 557h1v1h-1zM484 566h1v1h-1zM683 567h1v1h-1zM335 587h1v1h-1zM288 616h1v1h-1zM447 615h1v1h-1zM116 636h1v1h-1zM153 613h1v1h-1zM440 614h1v1h-1zM945 550h1v1h-1zM844 591h1v1h-1zM300 614h1v1h-1zM85 617h1v1h-1zM174 619h1v1h-1zM151 622h1v1h-1zM301 620h1v1h-1zM729 560h1v1h-1zM331 580h1v1h-1zM707 570h1v1h-1zM375 609h1v1h-1zM248 597h1v1h-1zM388 584h1v1h-1zM487 577h1v1h-1zM432 586h1v1h-1zM612 574h1v1h-1zM135 620h1v1h-1zM572 569h1v1h-1zM295 595h1v1h-1zM208 631h1v1h-1zM386 602h1v1h-1zM477 577h1v1h-1zM479 579h1v1h-1zM676 598h1v1h-1zM292 611h1v1h-1zM214 619h1v1h-1zM544 603h1v1h-1zM728 597h1v1h-1zM440 597h1v1h-1zM776 560h1v1h-1zM294 604h1v1h-1zM105 630h1v1h-1zM159 637h1v1h-1zM234 605h1v1h-1zM320 584h1v1h-1zM199 612h1v1h-1zM124 314h1v1h-1zM531 353h1v1h-1z"/><path fill="#0a80ff" d="M129 554h1v1h-1zM384 549h1v1h-1zM360 540h1v1h-1zM474 526h1v1h-1zM174 527h1v1h-1zM565 536h1v1h-1zM320 570h1v1h-1zM917 533h1v1h-1zM139 564h1v1h-1zM118 584h1v1h-1zM429 516h1v1h-1zM598 511h1v1h-1zM81 563h1v1h-1zM188 564h1v1h-1zM139 601h1v1h-1zM192 554h1v1h-1zM96 546h1v1h-1zM198 544h1v1h-1zM473 546h1v1h-1zM91 582h1v1h-1zM344 573h1v1h-1zM90 566h1v1h-1zM300 562h1v1h-1zM172 582h1v1h-1zM81 556h1v1h-1zM658 537h1v1h-1zM318 573h1v1h-1zM657 529h1v1h-1zM124 553h1v1h-1zM113 530h1v1h-1zM558 559h1v1h-1zM233 583h1v1h-1zM557 547h1v1h-1zM180 560h1v1h-1zM457 526h1v1h-1zM174 554h1v1h-1zM369 546h1v1h-1zM73 536h1v1h-1zM268 548h1v1h-1zM314 578h1v1h-1zM406 562h1v1h-1zM723 522h1v1h-1zM256 578h1v1h-1zM562 559h1v1h-1zM366 527h1v1h-1zM562 551h1v1h-1zM570 557h1v1h-1zM130 594h1v1h-1zM136 532h1v1h-1zM782 551h1v1h-1zM611 522h1v1h-1zM467 546h1v1h-1zM154 585h1v1h-1zM148 574h1v1h-1zM461 546h1v1h-1zM414 545h1v1h-1zM232 532h1v1h-1zM92 583h1v1h-1zM155 553h1v1h-1zM152 560h1v1h-1zM246 515h1v1h-1zM587 538h1v1h-1zM735 521h1v1h-1zM215 536h1v1h-1zM547 562h1v1h-1zM123 537h1v1h-1zM740 500h1v1h-1zM196 567h1v1h-1zM544 541h1v1h-1zM382 537h1v1h-1zM169 589h1v1h-1zM274 523h1v1h-1zM272 549h1v1h-1zM494 545h1v1h-1zM454 522h1v1h-1zM314 549h1v1h-1zM629 519h1v1h-1zM82 560h1v1h-1zM440 517h1v1h-1zM328 542h1v1h-1zM350 559h1v1h-1zM151 593h1v1h-1zM254 516h1v1h-1zM92 571h1v1h-1zM626 540h1v1h-1zM146 589h1v1h-1zM723 507h1v1h-1zM445 571h1v1h-1zM109 563h1v1h-1zM459 550h1v1h-1zM103 556h1v1h-1zM319 525h1v1h-1zM316 529h1v1h-1zM199 533h1v1h-1zM90 534h1v1h-1zM510 542h1v1h-1zM204 582h1v1h-1zM633 556h1v1h-1zM175 552h1v1h-1zM265 587h1v1h-1zM602 548h1v1h-1zM157 554h1v1h-1zM190 580h1v1h-1zM148 591h1v1h-1zM117 562h1v1h-1zM462 519h1v1h-1zM328 560h1v1h-1zM193 545h1v1h-1zM84 601h1v1h-1zM313 553h1v1h-1zM677 522h1v1h-1zM652 514h1v1h-1zM811 543h1v1h-1zM702 526h1v1h-1zM750 531h1v1h-1zM357 536h1v1h-1zM486 550h1v1h-1zM237 533h1v1h-1zM90 571h1v1h-1zM875 503h1v1h-1zM180 540h1v1h-1zM513 544h1v1h-1zM295 532h1v1h-1zM629 547h1v1h-1zM144 539h1v1h-1zM140 530h1v1h-1zM518 556h1v1h-1zM475 557h1v1h-1zM424 523h1v1h-1zM330 558h1v1h-1zM217 533h1v1h-1zM225 556h1v1h-1zM333 552h1v1h-1zM431 553h1v1h-1zM188 585h1v1h-1zM361 573h1v1h-1zM672 517h1v1h-1zM147 573h1v1h-1zM585 523h1v1h-1zM836 538h1v1h-1zM589 555h1v1h-1zM227 537h1v1h-1zM480 520h1v1h-1zM411 512h1v1h-1zM74 589h1v1h-1zM345 577h1v1h-1zM103 556h1v1h-1zM207 544h1v1h-1zM759 511h1v1h-1zM339 572h1v1h-1zM410 547h1v1h-1zM80 543h1v1h-1zM836 529h1v1h-1zM171 540h1v1h-1zM385 573h1v1h-1zM474 515h1v1h-1zM178 522h1v1h-1zM330 547h1v1h-1zM566 543h1v1h-1zM302 558h1v1h-1zM251 540h1v1h-1zM756 551h1v1h-1zM335 518h1v1h-1zM108 587h1v1h-1zM363 545h1v1h-1zM592 522h1v1h-1zM922 537h1v1h-1zM165 578h1v1h-1zM133 584h1v1h-1zM855 531h1v1h-1zM500 522h1v1h-1zM163 585h1v1h-1zM111 591h1v1h-1zM248 549h1v1h-1zM93 553h1v1h-1zM145 590h1v1h-1zM394 523h1v1h-1zM374 521h1v1h-1zM241 582h1v1h-1zM265 526h1v1h-1zM235 543h1v1h-1zM250 526h1v1h-1zM105 603h1v1h-1zM779 515h1v1h-1zM133 574h1v1h-1zM235 583h1v1h-1zM115 528h1v1h-1zM264 547h1v1h-1zM238 559h1v1h-1zM353 556h1v1h-1zM259 581h1v1h-1zM412 562h1v1h-1zM297 522h1v1h-1zM517 532h1v1h-1zM257 566h1v1h-1zM253 581h1v1h-1zM217 562h1v1h-1zM606 512h1v1h-1zM206 588h1v1h-1zM231 581h1v1h-1zM286 553h1v1h-1zM615 536h1v1h-1zM118 587h1v1h-1zM171 583h1v1h-1zM416 515h1v1h-1zM372 549h1v1h-1zM531 511h1v1h-1zM728 519h1v1h-1zM336 566h1v1h-1zM368 546h1v1h-1zM324 526h1v1h-1zM578 539h1v1h-1zM178 545h1v1h-1zM125 530h1v1h-1zM514 557h1v1h-1zM587 550h1v1h-1zM167 528h1v1h-1zM644 520h1v1h-1zM440 539h1v1h-1zM745 498h1v1h-1zM147 589h1v1h-1zM286 558h1v1h-1zM135 517h1v1h-1zM366 552h1v1h-1zM102 591h1v1h-1zM94 602h1v1h-1zM255 514h1v1h-1zM192 556h1v1h-1zM253 544h1v1h-1zM769 546h1v1h-1zM274 577h1v1h-1zM604 554h1v1h-1zM297 541h1v1h-1zM133 592h1v1h-1zM96 546h1v1h-1zM197 565h1v1h-1zM269 554h1v1h-1zM169 538h1v1h-1zM305 560h1v1h-1zM148 593h1v1h-1zM507 561h1v1h-1zM262 402h1v1h-1z"/><path fill="#00f0f0" d="M433 574h1v1h-1zM222 604h1v1h-1zM554 565h1v1h-1zM589 563h1v1h-1zM504 562h1v1h-1zM555 490h1v1h-1zM325 591h1v1h-1zM274 523h1v1h-1zM551 560h1v1h-1zM529 570h1v1h-1zM454 580h1v1h-1zM363 580h1v1h-1zM335 540h1v1h-1zM221 576h1v1h-1zM372 573h1v1h-1zM322 587h1v1h-1zM447 567h1v1h-1zM820 544h1v1h-1zM203 581h1v1h-1zM483 573h1v1h-1zM300 573h1v1h-1zM132 534h1v1h-1zM808 555h1v1h-1zM212 547h1v1h-1zM248 593h1v1h-1zM355 566h1v1h-1zM344 582h1v1h-1zM176 563h1v1h-1zM619 521h1v1h-1zM498 570h1v1h-1zM444 603h1v1h-1zM179 599h1v1h-1zM782 515h1v1h-1zM193 591h1v1h-1zM113 590h1v1h-1zM184 554h1v1h-1zM272 610h1v1h-1zM202 582h1v1h-1zM123 582h1v1h-1zM92 604h1v1h-1zM144 612h1v1h-1zM378 557h1v1h-1zM401 579h1v1h-1zM497 531h1v1h-1zM586 579h1v1h-1zM367 576h1v1h-1zM147 579h1v1h-1zM352 524h1v1h-1zM173 582h1v1h-1zM489 582h1v1h-1zM800 572h1v1h-1zM107 601h1v1h-1zM484 579h1v1h-1zM151 537h1v1h-1zM111 612h1v1h-1zM323 536h1v1h-1zM738 583h1v1h-1zM144 540h1v1h-1zM179 580h1v1h-1zM452 550h1v1h-1zM335 579h1v1h-1zM407 581h1v1h-1zM247 559h1v1h-1zM164 591h1v1h-1zM511 596h1v1h-1zM603 572h1v1h-1zM273 610h1v1h-1zM217 597h1v1h-1zM271 562h1v1h-1zM334 530h1v1h-1zM875 504h1v1h-1zM579 564h1v1h-1zM627 569h1v1h-1zM129 568h1v1h-1zM432 599h1v1h-1zM616 520h1v1h-1zM206 573h1v1h-1zM282 529h1v1h-1zM183 584h1v1h-1zM147 536h1v1h-1zM118 533h1v1h-1zM101 626h1v1h-1zM272 601h1v1h-1zM188 534h1v1h-1zM271 576h1v1h-1zM356 599h1v1h-1zM617 568h1v1h-1zM362 601h1v1h-1zM372 606h1v1h-1zM124 609h1v1h-1zM114 600h1v1h-1zM407 578h1v1h-1zM420 602h1v1h-1zM471 589h1v1h-1zM469 536h1v1h-1zM762 529h1v1h-1zM324 601h1v1h-1zM141 545h1v1h-1zM558 571h1v1h-1zM296 589h1v1h-1zM169 595h1v1h-1zM535 594h1v1h-1zM454 548h1v1h-1zM446 552h1v1h-1zM494 524h1v1h-1zM202 531h1v1h-1zM124 597h1v1h-1zM154 570h1v1h-1zM281 614h1v1h-1zM679 562h1v1h-1zM517 574h1v1h-1zM253 560h1v1h-1zM401 564h1v1h-1zM346 531h1v1h-1zM96 607h1v1h-1zM522 564h1v1h-1zM115 610h1v1h-1zM642 508h1v1h-1zM117 567h1v1h-1zM677 509h1v1h-1zM145 554h1v1h-1zM621 532h1v1h-1zM278 610h1v1h-1zM856 547h1v1h-1zM196 604h1v1h-1zM553 560h1v1h-1z"/><path fill="#00ff00" d="M355 600h1v1h-1zM88 639h1v1h-1zM325 588h1v1h-1zM683 567h1v1h-1zM367 622h1v1h-1zM307 598h1v1h-1zM664 573h1v1h-1zM147 629h1v1h-1zM250 609h1v1h-1zM875 576h1v1h-1zM115 626h1v1h-1zM828 567h1v1h-1zM558 596h1v1h-1zM608 564h1v1h-1zM183 614h1v1h-1zM626 588h1v1h-1zM602 598h1v1h-1zM465 604h1v1h-1zM126 641h1v1h-1zM187 599h1v1h-1zM826 564h1v1h-1zM244 618h1v1h-1zM371 599h1v1h-1zM400 581h1v1h-1zM897 567h1v1h-1zM225 596h1v1h-1zM149 623h1v1h-1zM242 606h1v1h-1zM826 570h1v1h-1zM169 601h1v1h-1zM426 606h1v1h-1zM504 601h1v1h-1zM629 579h1v1h-1zM335 617h1v1h-1zM74 635h1v1h-1zM345 589h1v1h-1zM722 556h1v1h-1zM78 610h1v1h-1zM110 603h1v1h-1zM494 587h1v1h-1zM678 592h1v1h-1zM90 601h1v1h-1zM271 603h1v1h-1zM315 605h1v1h-1zM424 586h1v1h-1zM216 603h1v1h-1zM264 631h1v1h-1zM377 589h1v1h-1zM473 565h1v1h-1zM331 622h1v1h-1zM666 579h1v1h-1zM348 579h1v1h-1zM249 597h1v1h-1zM301 620h1v1h-1zM361 605h1v1h-1zM271 603h1v1h-1zM661 579h1v1h-1zM243 624h1v1h-1zM358 593h1v1h-1zM613 601h1v1h-1zM173 603h1v1h-1zM293 615h1v1h-1zM592 569h1v1h-1zM898 588h1v1h-1zM907 561h1v1h-1zM573 563h1v1h-1zM455 576h1v1h-1zM333 589h1v1h-1zM99 617h1v1h-1zM338 609h1v1h-1zM121 616h1v1h-1zM698 561h1v1h-1zM272 601h1v1h-1zM250 613h1v1h-1zM495 590h1v1h-1zM244 602h1v1h-1zM744 561h1v1h-1zM346 601h1v1h-1zM198 600h1v1h-1zM294 605h1v1h-1zM290 586h1v1h-1zM480 610h1v1h-1zM302 616h1v1h-1zM222 609h1v1h-1zM316 605h1v1h-1zM290 606h1v1h-1zM362 622h1v1h-1zM279 594h1v1h-1zM285 606h1v1h-1zM646 594h1v1h-1zM97 628h1v1h-1zM382 597h1v1h-1zM182 634h1v1h-1zM560 567h1v1h-1zM101 606h1v1h-1zM689 562h1v1h-1zM581 576h1v1h-1zM372 612h1v1h-1zM81 608h1v1h-1zM864 571h1v1h-1zM196 604h1v1h-1zM186 616h1v1h-1zM159 605h1v1h-1zM125 634h1v1h-1zM599 604h1v1h-1zM135 636h1v1h-1zM90 615h1v1h-1zM101 636h1v1h-1zM662 570h1v1h-1zM696 582h1v1h-1zM452 619h1v1h-1zM326 600h1v1h-1zM541 596h1v1h-1zM486 585h1v1h-1zM117 630h1v1h-1zM483 603h1v1h-1zM149 603h1v1h-1zM286 596h1v1h-1zM724 586h1v1h-1zM865 561h1v1h-1zM281 606h1v1h-1zM271 620h1v1h-1zM306 606h1v1h-1zM453 612h1v1h-1zM152 629h1v1h-1zM85 646h1v1h-1zM567 603h1v1h-1zM407 599h1v1h-1zM748 588h1v1h-1zM902 546h1v1h-1zM529 591h1v1h-1zM660 608h1v1h-1zM95 615h1v1h-1z"/><path fill="#ff0000" d="M520 572h1v1h-1zM109 609h1v1h-1zM73 605h1v1h-1zM649 596h1v1h-1zM266 618h1v1h-1zM143 622h1v1h-1zM570 587h1v1h-1zM127 644h1v1h-1zM761 578h1v1h-1zM108 619h1v1h-1zM471 572h1v1h-1zM82 620h1v1h-1zM615 568h1v1h-1zM128 599h1v1h-1zM835 558h1v1h-1zM368 617h1v1h-1zM684 559h1v1h-1zM492 610h1v1h-1zM137 633h1v1h-1zM420 582h1v1h-1zM418 600h1v1h-1zM82 619h1v1h-1zM465 603h1v1h-1zM564 576h1v1h-1zM528 585h1v1h-1zM182 601h1v1h-1zM622 601h1v1h-1zM174 605h1v1h-1zM722 595h1v1h-1zM111 636h1v1h-1zM381 598h1v1h-1zM578 607h1v1h-1zM488 604h1v1h-1zM528 603h1v1h-1zM526 573h1v1h-1zM109 638h1v1h-1zM505 596h1v1h-1zM290 587h1v1h-1zM112 606h1v1h-1zM701 570h1v1h-1zM528 564h1v1h-1zM629 570h1v1h-1zM290 606h1v1h-1zM272 589h1v1h-1zM121 617h1v1h-1zM389 580h1v1h-1zM135 611h1v1h-1zM689 584h1v1h-1zM728 572h1v1h-1zM267 603h1v1h-1zM199 626h1v1h-1zM697 592h1v1h-1zM289 624h1v1h-1zM212 614h1v1h-1zM305 621h1v1h-1zM118 634h1v1h-1zM171 638h1v1h-1zM417 583h1v1h-1zM405 597h1v1h-1zM84 617h1v1h-1zM220 588h1v1h-1zM368 617h1v1h-1zM618 591h1v1h-1zM317 631h1v1h-1zM760 591h1v1h-1zM295 621h1v1h-1zM570 595h1v1h-1zM373 624h1v1h-1zM751 583h1v1h-1zM680 576h1v1h-1zM392 602h1v1h-1zM246 589h1v1h-1zM347 624h1v1h-1zM665 591h1v1h-1zM294 614h1v1h-1zM176 637h1v1h-1zM225 595h1v1h-1zM107 640h1v1h-1zM734 584h1v1h-1zM493 609h1v1h-1zM217 631h1v1h-1zM653 599h1v1h-1zM392 604h1v1h-1zM673 572h1v1h-1zM196 633h1v1h-1zM379 589h1v1h-1zM669 594h1v1h-1zM825 591h1v1h-1zM767 582h1v1h-1zM372 605h1v1h-1zM820 569h1v1h-1zM149 629h1v1h-1zM302 617h1v1h-1zM252 598h1v1h-1zM341 586h1v1h-1zM96 622h1v1h-1zM675 571h1v1h-1zM693 585h1v1h-1zM260 629h1v1h-1zM198 629h1v1h-1zM682 562h1v1h-1zM724 594h1v1h-1zM603 574h1v1h-1zM461 596h1v1h-1zM644 559h1v1h-1zM166 612h1v1h-1zM240 599h1v1h-1zM664 557h1v1h-1zM393 605h1v1h-1zM83 621h1v1h-1zM185 619h1v1h-1zM132 607h1v1h-1zM77 641h1v1h-1zM658 601h1v1h-1zM167 597h1v1h-1zM279 613h1v1h-1zM532 588h1v1h-1zM217 618h1v1h-1zM719 566h1v1h-1zM91 639h1v1h-1zM503 588h1v1h-1zM158 601h1v1h-1zM573 600h1v1h-1zM125 612h1v1h-1zM488 582h1v1h-1zM120 626h1v1h-1zM680 588h1v1h-1zM258 597h1v1h-1zM203 608h1v1h-1zM655 585h1v1h-1zM363 583h1v1h-1zM753 566h1v1h-1zM98 633h1v1h-1zM195 615h1v1h-1zM350 606h1v1h-1zM546 594h1v1h-1zM335 590h1v1h-1zM94 631h1v1h-1zM404 591h1v1h-1zM295 586h1v1h-1zM334 581h1v1h-1zM378 581h1v1h-1zM877 547h1v1h-1z"/><path fill="#ffff00" d="M125 620h1v1h-1zM201 609h1v1h-1zM255 614h1v1h-1zM359 618h1v1h-1zM497 577h1v1h-1zM121 635h1v1h-1zM549 577h1v1h-1zM298 587h1v1h-1zM286 585h1v1h-1zM459 595h1v1h-1zM720 574h1v1h-1zM694 603h1v1h-1zM86 630h1v1h-1zM74 641h1v1h-1zM90 615h1v1h-1zM407 578h1v1h-1zM648 576h1v1h-1zM145 602h1v1h-1zM300 596h1v1h-1zM527 593h1v1h-1zM119 630h1v1h-1zM432 598h1v1h-1zM529 570h1v1h-1zM169 611h1v1h-1zM231 625h1v1h-1zM143 596h1v1h-1zM241 605h1v1h-1zM217 591h1v1h-1zM242 614h1v1h-1zM132 615h1v1h-1zM242 591h1v1h-1zM389 585h1v1h-1zM409 591h1v1h-1zM801 578h1v1h-1zM404 599h1v1h-1zM393 598h1v1h-1zM242 599h1v1h-1zM418 610h1v1h-1zM331 615h1v1h-1zM403 607h1v1h-1zM208 620h1v1h-1zM658 602h1v1h-1zM243 610h1v1h-1zM462 569h1v1h-1zM395 600h1v1h-1zM417 577h1v1h-1zM164 629h1v1h-1zM78 644h1v1h-1zM522 578h1v1h-1zM261 632h1v1h-1zM330 622h1v1h-1zM101 612h1v1h-1zM133 628h1v1h-1zM392 587h1v1h-1zM389 583h1v1h-1zM274 596h1v1h-1zM211 624h1v1h-1zM133 612h1v1h-1zM575 586h1v1h-1zM890 585h1v1h-1zM179 611h1v1h-1zM872 583h1v1h-1zM574 595h1v1h-1zM423 604h1v1h-1zM268 587h1v1h-1zM937 544h1v1h-1zM250 595h1v1h-1zM184 634h1v1h-1zM568 593h1v1h-1zM294 611h1v1h-1zM133 632h1v1h-1zM503 591h1v1h-1zM288 607h1v1h-1zM767 552h1v1h-1zM580 600h1v1h-1zM246 606h1v1h-1zM159 606h1v1h-1zM346 580h1v1h-1zM769 589h1v1h-1zM189 632h1v1h-1zM630 564h1v1h-1zM441 584h1v1h-1zM303 622h1v1h-1zM280 581h1v1h-1zM419 577h1v1h-1zM255 603h1v1h-1zM351 581h1v1h-1zM319 612h1v1h-1zM513 575h1v1h-1zM399 583h1v1h-1zM495 580h1v1h-1zM875 556h1v1h-1zM92 615h1v1h-1zM663 575h1v1h-1zM126 606h1v1h-1zM706 566h1v1h-1zM126 623h1v1h-1zM221 610h1v1h-1zM360 610h1v1h-1zM588 581h1v1h-1zM496 608h1v1h-1zM574 601h1v1h-1zM406 594h1v1h-1zM226 603h1v1h-1zM597 574h1v1h-1zM137 634h1v1h-1zM72 612h1v1h-1zM252 614h1v1h-1zM593 589h1v1h-1zM231 630h1v1h-1zM294 592h1v1h-1zM247 599h1v1h-1zM462 601h1v1h-1zM580 587h1v1h-1zM467 579h1v1h-1zM168 597h1v1h-1zM847 583h1v1h-1zM298 609h1v1h-1zM265 601h1v1h-1zM457 599h1v1h-1zM367 580h1v1h-1zM256 598h1v1h-1zM303 587h1v1h-1zM168 608h1v1h-1zM561 591h1v1h-1zM227 618h1v1h-1zM123 616h1v1h-1zM435 582h1v1h-1zM716 595h1v1h-1zM135 632h1v1h-1zM536 585h1v1h-1zM883 582h1v1h-1zM243 598h1v1h-1zM120 321h1v1h-1z"/><path fill="#0a80ff" d="M438 520h1v1h-1zM459 511h1v1h-1zM320 565h1v1h-1zM101 575h1v1h-1zM774 513h1v1h-1zM310 584h1v1h-1zM303 529h1v1h-1zM550 542h1v1h-1zM732 519h1v1h-1zM891 550h1v1h-1zM200 519h1v1h-1zM250 574h1v1h-1zM142 556h1v1h-1zM273 551h1v1h-1zM151 533h1v1h-1zM197 535h1v1h-1zM595 514h1v1h-1zM526 523h1v1h-1zM286 560h1v1h-1zM777 527h1v1h-1zM612 556h1v1h-1zM332 556h1v1h-1zM300 531h1v1h-1zM213 594h1v1h-1zM232 523h1v1h-1zM165 546h1v1h-1zM435 564h1v1h-1zM420 553h1v1h-1zM346 516h1v1h-1zM585 502h1v1h-1zM579 516h1v1h-1zM367 542h1v1h-1zM248 562h1v1h-1zM157 591h1v1h-1zM402 535h1v1h-1zM417 551h1v1h-1zM229 575h1v1h-1zM258 571h1v1h-1zM455 514h1v1h-1zM195 579h1v1h-1zM242 564h1v1h-1zM837 532h1v1h-1zM353 562h1v1h-1zM241 520h1v1h-1zM215 545h1v1h-1zM107 581h1v1h-1zM559 562h1v1h-1zM127 566h1v1h-1zM860 542h1v1h-1zM458 548h1v1h-1zM469 522h1v1h-1zM329 566h1v1h-1zM86 590h1v1h-1zM694 527h1v1h-1zM77 566h1v1h-1zM567 534h1v1h-1zM532 504h1v1h-1zM290 523h1v1h-1zM206 552h1v1h-1zM361 536h1v1h-1zM157 586h1v1h-1zM215 567h1v1h-1zM125 572h1v1h-1zM554 525h1v1h-1zM319 544h1v1h-1zM330 580h1v1h-1zM259 550h1v1h-1zM174 532h1v1h-1zM200 537h1v1h-1zM254 561h1v1h-1zM340 560h1v1h-1zM76 572h1v1h-1zM141 585h1v1h-1zM296 548h1v1h-1zM564 503h1v1h-1zM103 527h1v1h-1zM287 533h1v1h-1zM270 570h1v1h-1zM417 573h1v1h-1zM96 569h1v1h-1zM190 571h1v1h-1zM256 569h1v1h-1zM278 585h1v1h-1zM152 540h1v1h-1zM412 554h1v1h-1zM76 594h1v1h-1zM420 509h1v1h-1zM351 544h1v1h-1zM83 538h1v1h-1zM504 562h1v1h-1zM648 497h1v1h-1zM174 566h1v1h-1zM701 481h1v1h-1zM646 542h1v1h-1zM246 573h1v1h-1zM212 576h1v1h-1zM258 537h1v1h-1zM750 532h1v1h-1zM211 558h1v1h-1zM79 528h1v1h-1zM455 524h1v1h-1zM517 576h1v1h-1zM116 566h1v1h-1zM339 531h1v1h-1zM305 541h1v1h-1zM875 540h1v1h-1zM622 524h1v1h-1zM391 563h1v1h-1zM798 531h1v1h-1zM304 573h1v1h-1zM102 575h1v1h-1zM659 542h1v1h-1zM96 563h1v1h-1zM253 565h1v1h-1zM132 553h1v1h-1zM365 515h1v1h-1zM689 521h1v1h-1zM614 517h1v1h-1zM166 542h1v1h-1zM184 589h1v1h-1zM447 540h1v1h-1zM739 523h1v1h-1zM196 545h1v1h-1zM89 599h1v1h-1zM669 522h1v1h-1zM233 583h1v1h-1zM139 579h1v1h-1zM305 577h1v1h-1zM482 570h1v1h-1zM137 528h1v1h-1zM314 512h1v1h-1zM178 573h1v1h-1zM515 559h1v1h-1zM333 563h1v1h-1zM458 562h1v1h-1zM168 560h1v1h-1zM595 523h1v1h-1zM376 516h1v1h-1zM522 523h1v1h-1zM751 542h1v1h-1zM324 523h1v1h-1zM742 548h1v1h-1zM531 546h1v1h-1zM266 574h1v1h-1zM549 546h1v1h-1zM130 593h1v1h-1zM494 543h1v1h-1zM78 542h1v1h-1zM722 506h1v1h-1zM113 538h1v1h-1zM153 535h1v1h-1zM408 578h1v1h-1zM565 519h1v1h-1zM262 554h1v1h-1zM363 581h1v1h-1zM131 591h1v1h-1zM258 545h1v1h-1zM258 565h1v1h-1zM571 545h1v1h-1zM556 531h1v1h-1zM262 573h1v1h-1zM542 514h1v1h-1zM454 572h1v1h-1zM287 564h1v1h-1zM604 545h1v1h-1zM583 515h1v1h-1zM254 540h1v1h-1zM229 551h1v1h-1zM630 550h1v1h-1zM455 554h1v1h-1zM778 545h1v1h-1zM538 555h1v1h-1zM472 566h1v1h-1zM106 584h1v1h-1zM230 584h1v1h-1zM680 514h1v1h-1zM115 581h1v1h-1zM430 579h1v1h-1zM445 517h1v1h-1zM245 577h1v1h-1zM273 585h1v1h-1zM243 549h1v1h-1zM319 545h1v1h-1zM516 541h1v1h-1zM115 570h1v1h-1zM461 561h1v1h-1zM172 567h1v1h-1zM394 562h1v1h-1zM482 529h1v1h-1zM398 554h1v1h-1zM442 568h1v1h-1zM881 526h1v1h-1zM295 532h1v1h-1zM487 565h1v1h-1zM754 508h1v1h-1zM113 529h1v1h-1zM322 551h1v1h-1zM367 570h1v1h-1zM488 555h1v1h-1zM541 510h1v1h-1zM308 519h1v1h-1zM199 539h1v1h-1zM680 502h1v1h-1zM823 514h1v1h-1zM169 582h1v1h-1zM109 546h1v1h-1zM159 581h1v1h-1zM777 512h1v1h-1zM411 567h1v1h-1zM151 565h1v1h-1zM791 540h1v1h-1zM127 532h1v1h-1zM486 550h1v1h-1zM323 549h1v1h-1zM171 588h1v1h-1zM549 540h1v1h-1zM458 529h1v1h-1zM223 525h1v1h-1zM194 535h1v1h-1zM625 558h1v1h-1zM870 508h1v1h-1zM466 557h1v1h-1zM110 551h1v1h-1zM364 552h1v1h-1zM411 508h1v1h-1zM555 509h1v1h-1zM263 563h1v1h-1zM612 551h1v1h-1zM822 504h1v1h-1zM404 529h1v1h-1zM93 589h1v1h-1zM400 524h1v1h-1zM121 531h1v1h-1zM272 547h1v1h-1zM424 569h1v1h-1zM542 569h1v1h-1zM333 533h1v1h-1zM452 561h1v1h-1zM752 552h1v1h-1zM712 535h1v1h-1zM109 588h1v1h-1zM330 438h1v1h-1z"/><path fill="#00f0f0" d="M410 559h1v1h-1zM412 553h1v1h-1zM537 571h1v1h-1zM226 558h1v1h-1zM217 548h1v1h-1zM647 537h1v1h-1zM337 573h1v1h-1zM305 539h1v1h-1zM282 536h1v1h-1zM504 566h1v1h-1zM759 532h1v1h-1zM361 586h1v1h-1zM94 588h1v1h-1zM332 610h1v1h-1zM403 571h1v1h-1zM247 568h1v1h-1zM139 616h1v1h-1zM72 606h1v1h-1zM414 601h1v1h-1zM304 612h1v1h-1zM461 579h1v1h-1zM73 545h1v1h-1zM295 522h1v1h-1zM151 600h1v1h-1zM116 593h1v1h-1zM322 567h1v1h-1zM581 582h1v1h-1zM179 583h1v1h-1zM256 590h1v1h-1zM557 592h1v1h-1zM123 549h1v1h-1zM705 555h1v1h-1zM651 567h1v1h-1zM267 534h1v1h-1zM229 601h1v1h-1zM277 540h1v1h-1zM204 564h1v1h-1zM815 544h1v1h-1zM202 594h1v1h-1zM236 590h1v1h-1zM150 598h1v1h-1zM88 616h1v1h-1zM542 592h1v1h-1zM475 556h1v1h-1zM612 578h1v1h-1zM351 529h1v1h-1zM147 525h1v1h-1zM480 542h1v1h-1zM356 565h1v1h-1zM329 590h1v1h-1zM243 594h1v1h-1zM117 589h1v1h-1zM176 597h1v1h-1zM360 551h1v1h-1zM119 614h1v1h-1zM369 557h1v1h-1zM241 605h1v1h-1zM356 590h1v1h-1zM145 599h1v1h-1zM438 577h1v1h-1zM713 513h1v1h-1zM595 540h1v1h-1zM342 579h1v1h-1zM667 555h1v1h-1zM297 583h1v1h-1zM298 583h1v1h-1zM88 553h1v1h-1zM758 554h1v1h-1zM436 574h1v1h-1zM481 526h1v1h-1zM363 520h1v1h-1zM119 560h1v1h-1zM606 511h1v1h-1zM409 540h1v1h-1zM214 541h1v1h-1zM130 606h1v1h-1zM603 517h1v1h-1zM705 533h1v1h-1zM495 578h1v1h-1zM445 581h1v1h-1zM218 543h1v1h-1zM535 573h1v1h-1zM521 551h1v1h-1zM73 607h1v1h-1zM222 586h1v1h-1zM79 607h1v1h-1zM248 611h1v1h-1zM354 581h1v1h-1zM178 623h1v1h-1zM305 581h1v1h-1zM853 528h1v1h-1zM765 513h1v1h-1zM612 529h1v1h-1zM377 579h1v1h-1zM226 558h1v1h-1zM179 556h1v1h-1zM445 533h1v1h-1zM164 544h1v1h-1zM461 519h1v1h-1zM431 520h1v1h-1zM600 558h1v1h-1zM214 585h1v1h-1zM721 541h1v1h-1zM222 591h1v1h-1zM528 597h1v1h-1zM161 601h1v1h-1zM232 564h1v1h-1zM258 533h1v1h-1zM590 525h1v1h-1zM137 546h1v1h-1zM86 596h1v1h-1zM96 592h1v1h-1zM623 520h1v1h-1zM169 563h1v1h-1zM175 581h1v1h-1zM427 571h1v1h-1zM554 557h1v1h-1zM220 579h1v1h-1zM700 521h1v1h-1zM557 590h1v1h-1zM283 586h1v1h-1zM260 587h1v1h-1zM344 530h1v1h-1zM190 598h1v1h-1zM209 604h1v1h-1zM101 597h1v1h-1z"/><path fill="#00ff00" d="M163 598h1v1h-1zM428 575h1v1h-1zM144 644h1v1h-1zM917 554h1v1h-1zM816 562h1v1h-1zM430 612h1v1h-1zM343 593h1v1h-1zM499 575h1v1h-1zM82 619h1v1h-1zM341 595h1v1h-1zM577 603h1v1h-1zM911 585h1v1h-1zM919 566h1v1h-1zM280 599h1v1h-1zM568 565h1v1h-1zM123 622h1v1h-1zM394 593h1v1h-1zM393 618h1v1h-1zM600 587h1v1h-1zM89 624h1v1h-1zM548 582h1v1h-1zM138 622h1v1h-1zM579 589h1v1h-1zM254 591h1v1h-1zM330 594h1v1h-1zM111 627h1v1h-1zM232 605h1v1h-1zM275 603h1v1h-1zM810 558h1v1h-1zM897 546h1v1h-1zM137 605h1v1h-1zM815 553h1v1h-1zM759 568h1v1h-1zM963 571h1v1h-1zM750 560h1v1h-1zM280 592h1v1h-1zM199 603h1v1h-1zM423 605h1v1h-1zM225 591h1v1h-1zM464 591h1v1h-1zM191 630h1v1h-1zM190 606h1v1h-1zM259 629h1v1h-1zM606 562h1v1h-1zM82 636h1v1h-1zM444 617h1v1h-1zM473 606h1v1h-1zM741 551h1v1h-1zM196 616h1v1h-1zM411 595h1v1h-1zM765 573h1v1h-1zM224 615h1v1h-1zM307 613h1v1h-1zM720 573h1v1h-1zM309 614h1v1h-1zM335 593h1v1h-1zM481 579h1v1h-1zM198 629h1v1h-1zM469 611h1v1h-1zM518 598h1v1h-1zM209 610h1v1h-1zM654 585h1v1h-1zM94 616h1v1h-1zM336 625h1v1h-1zM78 643h1v1h-1zM537 581h1v1h-1zM231 611h1v1h-1zM274 621h1v1h-1zM356 595h1v1h-1zM320 586h1v1h-1zM153 610h1v1h-1zM497 594h1v1h-1zM80 640h1v1h-1zM482 609h1v1h-1zM385 582h1v1h-1zM947 575h1v1h-1zM326 604h1v1h-1zM133 625h1v1h-1zM899 557h1v1h-1zM546 596h1v1h-1zM332 589h1v1h-1zM109 601h1v1h-1zM959 579h1v1h-1zM379 602h1v1h-1zM130 608h1v1h-1zM141 626h1v1h-1zM84 633h1v1h-1zM177 637h1v1h-1zM722 579h1v1h-1zM150 635h1v1h-1zM809 582h1v1h-1zM429 612h1v1h-1zM118 643h1v1h-1zM334 581h1v1h-1zM297 607h1v1h-1zM448 584h1v1h-1zM274 591h1v1h-1zM607 579h1v1h-1zM458 582h1v1h-1zM580 600h1v1h-1zM278 592h1v1h-1zM315 579h1v1h-1zM246 619h1v1h-1zM139 635h1v1h-1zM479 602h1v1h-1zM242 623h1v1h-1zM209 595h1v1h-1zM93 639h1v1h-1zM275 620h1v1h-1zM902 569h1v1h-1zM380 616h1v1h-1zM260 607h1v1h-1zM403 593h1v1h-1zM132 602h1v1h-1zM281 607h1v1h-1zM701 570h1v1h-1zM231 609h1v1h-1zM784 575h1v1h-1zM865 566h1v1h-1zM241 624h1v1h-1zM144 632h1v1h-1zM444 601h1v1h-1zM243 595h1v1h-1zM565 593h1v1h-1zM566 602h1v1h-1zM450 596h1v1h-1zM750 576h1v1h-1zM136 603h1v1h-1zM341 616h1v1h-1zM844 546h1v1h-1zM141 614h1v1h-1zM288 599h1v1h-1zM553 576h1v1h-1z"/><path fill="#ff0000" d="M584 594h1v1h-1zM919 574h1v1h-1zM537 586h1v1h-1zM245 595h1v1h-1zM368 612h1v1h-1zM976 547h1v1h-1zM316 582h1v1h-1zM106 609h1v1h-1zM424 599h1v1h-1zM537 586h1v1h-1zM237 620h1v1h-1zM595 570h1v1h-1zM335 599h1v1h-1zM203 612h1v1h-1zM79 615h1v1h-1zM136 597h1v1h-1zM655 585h1v1h-1zM165 600h1v1h-1zM302 621h1v1h-1zM143 634h1v1h-1zM456 575h1v1h-1zM415 621h1v1h-1zM182 619h1v1h-1zM389 609h1v1h-1zM478 581h1v1h-1zM844 592h1v1h-1zM871 594h1v1h-1zM128 620h1v1h-1zM241 591h1v1h-1zM598 604h1v1h-1zM74 621h1v1h-1zM136 602h1v1h-1zM552 612h1v1h-1zM727 567h1v1h-1zM97 643h1v1h-1zM358 584h1v1h-1zM89 607h1v1h-1zM143 623h1v1h-1zM315 610h1v1h-1zM73 625h1v1h-1zM686 573h1v1h-1zM446 584h1v1h-1zM303 617h1v1h-1zM425 574h1v1h-1zM136 640h1v1h-1zM439 589h1v1h-1zM457 584h1v1h-1zM534 597h1v1h-1zM839 554h1v1h-1zM503 601h1v1h-1zM651 563h1v1h-1zM208 622h1v1h-1zM286 612h1v1h-1zM113 605h1v1h-1zM197 622h1v1h-1zM142 600h1v1h-1zM342 608h1v1h-1zM409 596h1v1h-1zM90 599h1v1h-1zM393 584h1v1h-1zM159 619h1v1h-1zM388 573h1v1h-1zM645 572h1v1h-1zM150 602h1v1h-1zM488 602h1v1h-1zM373 622h1v1h-1zM246 599h1v1h-1zM649 555h1v1h-1zM522 570h1v1h-1zM102 627h1v1h-1zM576 590h1v1h-1zM258 627h1v1h-1zM875 562h1v1h-1zM92 625h1v1h-1zM427 615h1v1h-1zM232 627h1v1h-1zM752 592h1v1h-1zM108 606h1v1h-1zM195 632h1v1h-1zM412 603h1v1h-1zM334 584h1v1h-1zM636 585h1v1h-1zM776 586h1v1h-1zM157 628h1v1h-1zM472 609h1v1h-1zM303 623h1v1h-1zM818 572h1v1h-1zM888 552h1v1h-1zM237 611h1v1h-1zM104 643h1v1h-1zM715 593h1v1h-1zM188 604h1v1h-1zM244 587h1v1h-1zM508 579h1v1h-1zM125 609h1v1h-1zM160 628h1v1h-1zM350 591h1v1h-1zM459 588h1v1h-1zM274 620h1v1h-1zM466 585h1v1h-1zM663 583h1v1h-1zM486 617h1v1h-1zM582 584h1v1h-1zM148 618h1v1h-1zM192 624h1v1h-1zM346 599h1v1h-1zM396 606h1v1h-1zM164 631h1v1h-1zM212 609h1v1h-1zM671 578h1v1h-1zM858 565h1v1h-1zM750 561h1v1h-1zM670 577h1v1h-1zM231 634h1v1h-1zM467 600h1v1h-1zM119 621h1v1h-1zM367 584h1v1h-1zM313 584h1v1h-1zM440 599h1v1h-1zM825 558h1v1h-1zM412 612h1v1h-1zM670 584h1v1h-1zM132 639h1v1h-1zM241 606h1v1h-1zM458 572h1v1h-1zM137 632h1v1h-1zM94 643h1v1h-1zM284 611h1v1h-1zM335 584h1v1h-1zM75 623h1v1h-1zM136 616h1v1h-1zM179 604h1v1h-1zM103 609h1v1h-1zM506 586h1v1h-1zM133 639h1v1h-1zM162 620h1v1h-1zM162 594h1v1h-1zM506 594h1v1h-1zM444 592h1v1h-1zM381 587h1v1h-1zM857 581h1v1h-1zM660 586h1v1h-1zM435 605h1v1h-1z"/><path fill="#ffff00" d="M387 598h1v1h-1zM497 586h1v1h-1zM300 614h1v1h-1zM264 620h1v1h-1zM742 553h1v1h-1zM283 593h1v1h-1zM499 567h1v1h-1zM405 593h1v1h-1zM424 619h1v1h-1zM389 587h1v1h-1zM301 601h1v1h-1zM298 598h1v1h-1zM213 632h1v1h-1zM379 616h1v1h-1zM424 588h1v1h-1zM322 603h1v1h-1zM661 605h1v1h-1zM247 617h1v1h-1zM662 569h1v1h-1zM198 624h1v1h-1zM631 560h1v1h-1zM368 619h1v1h-1zM392 618h1v1h-1zM853 570h1v1h-1zM168 625h1v1h-1zM491 597h1v1h-1zM393 604h1v1h-1zM151 624h1v1h-1zM893 548h1v1h-1zM147 606h1v1h-1zM703 581h1v1h-1zM780 555h1v1h-1zM757 594h1v1h-1zM261 621h1v1h-1zM975 581h1v1h-1zM262 612h1v1h-1zM469 584h1v1h-1zM604 596h1v1h-1zM162 618h1v1h-1zM72 635h1v1h-1zM301 579h1v1h-1zM126 627h1v1h-1zM594 599h1v1h-1zM440 609h1v1h-1zM199 628h1v1h-1zM687 557h1v1h-1zM497 571h1v1h-1zM699 591h1v1h-1zM263 624h1v1h-1zM171 605h1v1h-1zM81 639h1v1h-1zM566 598h1v1h-1zM158 616h1v1h-1zM403 609h1v1h-1zM312 584h1v1h-1zM936 547h1v1h-1zM285 609h1v1h-1zM202 593h1v1h-1zM174 591h1v1h-1zM395 616h1v1h-1zM765 580h1v1h-1zM303 582h1v1h-1zM114 609h1v1h-1zM438 584h1v1h-1zM290 579h1v1h-1zM476 580h1v1h-1zM374 585h1v1h-1zM189 610h1v1h-1zM166 620h1v1h-1zM780 564h1v1h-1zM265 608h1v1h-1zM243 616h1v1h-1zM220 629h1v1h-1zM303 630h1v1h-1zM110 610h1v1h-1zM895 581h1v1h-1zM241 614h1v1h-1zM82 604h1v1h-1zM875 589h1v1h-1zM274 589h1v1h-1zM185 612h1v1h-1zM350 602h1v1h-1zM186 635h1v1h-1zM625 579h1v1h-1zM528 599h1v1h-1zM539 577h1v1h-1zM208 613h1v1h-1zM413 579h1v1h-1zM435 587h1v1h-1zM506 600h1v1h-1zM450 595h1v1h-1zM650 570h1v1h-1zM183 627h1v1h-1zM138 599h1v1h-1zM592 573h1v1h-1zM382 593h1v1h-1zM609 592h1v1h-1zM171 617h1v1h-1zM429 577h1v1h-1zM338 584h1v1h-1zM181 594h1v1h-1zM781 584h1v1h-1zM397 590h1v1h-1zM341 587h1v1h-1zM859 547h1v1h-1zM86 633h1v1h-1zM663 603h1v1h-1zM833 583h1v1h-1zM285 601h1v1h-1zM129 596h1v1h-1zM336 581h1v1h-1zM405 595h1v1h-1zM484 606h1v1h-1zM585 588h1v1h-1zM234 590h1v1h-1zM576 578h1v1h-1zM672 600h1v1h-1zM650 598h1v1h-1zM90 608h1v1h-1zM422 597h1v1h-1zM319 614h1v1h-1zM717 596h1v1h-1zM170 598h1v1h-1zM239 610h1v1h-1zM314 627h1v1h-1zM188 589h1v1h-1zM609 607h1v1h-1zM101 610h1v1h-1zM523 571h1v1h-1zM654 573h1v1h-1zM924 572h1v1h-1zM750 582h1v1h-1zM122 636h1v1h-1zM86 399h1v1h-1z"/></svg>
<div class="abs" style="left:72px;top:145px;font-size:12.5px;line-height:16px">ms</div>
<div class="yl" style="top:153px">100.0</div><div class="yl" style="top:204px">90.0</div><div class="yl" style="top:255px">80.0</div><div class="yl" style="top:306px">70.0</div><div class="yl" style="top:356px">60.0</div><div class="yl" style="top:407px">50.0</div><div class="yl" style="top:458px">40.0</div><div class="yl" style="top:508px">30.0</div><div class="yl" style="top:559px">20.0</div><div class="yl" style="top:610px">10.0</div>
<div class="xl" style="left:32px">0</div><div class="xl" style="left:123px">64</div><div class="xl" style="left:215px">128</div><div class="xl" style="left:306px">192</div><div class="xl" style="left:398px">256</div><div class="xl" style="left:489px">320</div><div class="xl" style="left:581px">384</div><div class="xl" style="left:672px">448</div><div class="xl" style="left:764px">512</div><div class="xl" style="left:855px">576</div><div class="xl" style="left:947px">640gB</div>
<!-- right controls -->
<div class="abs" style="left:1032px;top:157px;width:98px;height:26px;border:1px solid #3c7fb1;border-radius:3px;background:linear-gradient(180deg,#eef7fd 0%,#dcf0fb 45%,#c4e2f4 50%,#b8d9ee 100%);box-shadow:inset 0 0 0 1px rgba(255,255,255,.7),0 0 1px 1px rgba(38,160,218,.6)"></div>
<div class="lbl" style="left:1032px;top:162px;width:98px;text-align:center">Start</div>
<div class="sep" style="top:196px;width:135px"></div>
<div class="abs" style="left:1027px;top:204px"><svg width="16" height="16" viewBox="0 0 16 16"><circle cx="8" cy="8" r="7" fill="#f2f2f2" stroke="#7a7a7a"/><circle cx="8" cy="8" r="4" fill="#1c6fa8"/><circle cx="7" cy="6.8" r="1.6" fill="#8fd3ff"/></svg></div>
<div class="lbl" style="left:1046px;top:204px">Read</div>
<div class="abs" style="left:1027px;top:224px"><svg width="16" height="16" viewBox="0 0 16 16"><circle cx="8" cy="8" r="7" fill="#ededed" stroke="#7a7a7a"/><circle cx="8" cy="8" r="5" fill="#e0e0e0"/></svg></div>
<div class="lbl" style="left:1046px;top:224px">Write</div>
<div class="sep" style="top:244px;width:135px"></div>
<div class="abs" style="left:1027px;top:254px"><svg width="16" height="16" viewBox="0 0 16 16"><rect x="0.5" y="0.5" width="15" height="15" fill="#f4f4f4" stroke="#8f8f8f"/><rect x="2.5" y="2.5" width="11" height="11" fill="#e2e2e2" stroke="#cfcfcf"/></svg></div>
<div class="lbl" style="left:1046px;top:254px">Short stroke</div>
<div class="abs" style="left:1027px;top:278px;width:82px;height:24px;border:1px solid #b5b5b5;background:#fff"></div>
<div class="lbl" style="left:1030px;top:282px;color:#8a8a8a">40</div>
<div class="abs" style="left:1088px;top:280px;width:19px;height:10px;border:1px solid #d0d0d0;background:#ededed"></div>
<div class="abs" style="left:1088px;top:290px;width:19px;height:10px;border:1px solid #d0d0d0;background:#ededed"></div>
<div class="abs" style="left:1094px;top:283px;width:0;height:0;border-left:4px solid transparent;border-right:4px solid transparent;border-bottom:4px solid #8a8a8a"></div>
<div class="abs" style="left:1094px;top:293px;width:0;height:0;border-left:4px solid transparent;border-right:4px solid transparent;border-top:4px solid #8a8a8a"></div>
<div class="lbl" style="left:1125px;top:283px">gB</div>
<div class="sep" style="top:314px;width:133px"></div>
<div class="abs" style="left:1027px;top:328px"><svg width="16" height="16" viewBox="0 0 16 16"><rect x="0.5" y="0.5" width="15" height="15" fill="#f4f4f4" stroke="#8f8f8f"/><rect x="2.5" y="2.5" width="11" height="11" fill="#dcdcdc" stroke="#c8c8c8"/><path d="M4 8.5l2.5 3.5L12 4" stroke="#3a4f98" stroke-width="1.8" fill="none"/></svg></div>
<div class="lbl" style="left:1046px;top:328px">4 KB align</div>
<!-- table -->
<div class="abs" style="left:56px;top:715px;width:694px;height:2px;background:#6d6d6d"></div>
<div class="vd" style="left:176px;top:697px;height:128px"></div>
<div class="vd" style="left:322px;top:697px;height:128px"></div>
<div class="vd" style="left:476px;top:699px;height:127px"></div>
<div class="vd" style="left:622px;top:697px;height:128px"></div>
<div class="hd" style="left:56px;width:120px">transfer size</div>
<div class="hd" style="left:178px;width:144px">operations / sec</div>
<div class="hd" style="left:324px;width:152px">avg. access time</div>
<div class="hd" style="left:478px;width:144px">max. access time</div>
<div class="hd" style="left:624px;width:126px">avg. speed</div>
<div class="sw" style="top:727px;background:#ffff00"></div><div class="cb" style="left:56px;top:723px"><svg width="16" height="16" viewBox="0 0 16 16"><rect x="0.5" y="0.5" width="15" height="15" fill="#f4f4f4" stroke="#8f8f8f"/><rect x="2.5" y="2.5" width="11" height="11" fill="#dcdcdc" stroke="#c8c8c8"/><path d="M4 8.5l2.5 3.5L12 4" stroke="#3a4f98" stroke-width="1.8" fill="none"/></svg></div><div class="rn" style="top:723px">512 bytes</div><div class="rv" style="top:721px;left:180px;width:119px">78 IOPS</div><div class="rv" style="top:721px;left:326px;width:120px">12.795 ms</div><div class="rv" style="top:721px;left:480px;width:112px">87.488 ms</div><div class="rv" style="top:721px;left:626px;width:112px">0.038 MB/s</div><div class="sw" style="top:747px;background:#ff0000"></div><div class="cb" style="left:56px;top:743px"><svg width="16" height="16" viewBox="0 0 16 16"><rect x="0.5" y="0.5" width="15" height="15" fill="#f4f4f4" stroke="#8f8f8f"/><rect x="2.5" y="2.5" width="11" height="11" fill="#dcdcdc" stroke="#c8c8c8"/><path d="M4 8.5l2.5 3.5L12 4" stroke="#3a4f98" stroke-width="1.8" fill="none"/></svg></div><div class="rn" style="top:743px">4 KB</div><div class="rv" style="top:741px;left:180px;width:119px">78 IOPS</div><div class="rv" style="top:741px;left:326px;width:120px">12.680 ms</div><div class="rv" style="top:741px;left:480px;width:112px">45.430 ms</div><div class="rv" style="top:741px;left:626px;width:112px">0.308 MB/s</div><div class="sw" style="top:767px;background:#00ff00"></div><div class="cb" style="left:56px;top:763px"><svg width="16" height="16" viewBox="0 0 16 16"><rect x="0.5" y="0.5" width="15" height="15" fill="#f4f4f4" stroke="#8f8f8f"/><rect x="2.5" y="2.5" width="11" height="11" fill="#dcdcdc" stroke="#c8c8c8"/><path d="M4 8.5l2.5 3.5L12 4" stroke="#3a4f98" stroke-width="1.8" fill="none"/></svg></div><div class="rn" style="top:763px">64 KB</div><div class="rv" style="top:761px;left:180px;width:119px">74 IOPS</div><div class="rv" style="top:761px;left:326px;width:120px">13.344 ms</div><div class="rv" style="top:761px;left:480px;width:112px">23.998 ms</div><div class="rv" style="top:761px;left:626px;width:112px">4.684 MB/s</div><div class="sw" style="top:789px;background:#0a78ff"></div><div class="cb" style="left:56px;top:785px"><svg width="16" height="16" viewBox="0 0 16 16"><rect x="0.5" y="0.5" width="15" height="15" fill="#f4f4f4" stroke="#8f8f8f"/><rect x="2.5" y="2.5" width="11" height="11" fill="#dcdcdc" stroke="#c8c8c8"/><path d="M4 8.5l2.5 3.5L12 4" stroke="#3a4f98" stroke-width="1.8" fill="none"/></svg></div><div class="rn" style="top:785px">1 MB</div><div class="rv" style="top:783px;left:180px;width:119px">42 IOPS</div><div class="rv" style="top:783px;left:326px;width:120px">23.364 ms</div><div class="rv" style="top:783px;left:480px;width:112px">52.090 ms</div><div class="rv" style="top:783px;left:626px;width:112px">42.800 MB/s</div><div class="sw" style="top:811px;background:#00ffff"></div><div class="cb" style="left:56px;top:807px"><svg width="16" height="16" viewBox="0 0 16 16"><rect x="0.5" y="0.5" width="15" height="15" fill="#f4f4f4" stroke="#8f8f8f"/><rect x="2.5" y="2.5" width="11" height="11" fill="#dcdcdc" stroke="#c8c8c8"/><path d="M4 8.5l2.5 3.5L12 4" stroke="#3a4f98" stroke-width="1.8" fill="none"/></svg></div><div class="rn" style="top:807px">Random</div><div class="rv" style="top:805px;left:180px;width:119px">54 IOPS</div><div class="rv" style="top:805px;left:326px;width:120px">18.279 ms</div><div class="rv" style="top:805px;left:480px;width:112px">36.698 ms</div><div class="rv" style="top:805px;left:626px;width:112px">27.758 MB/s</div>
</body></html>
